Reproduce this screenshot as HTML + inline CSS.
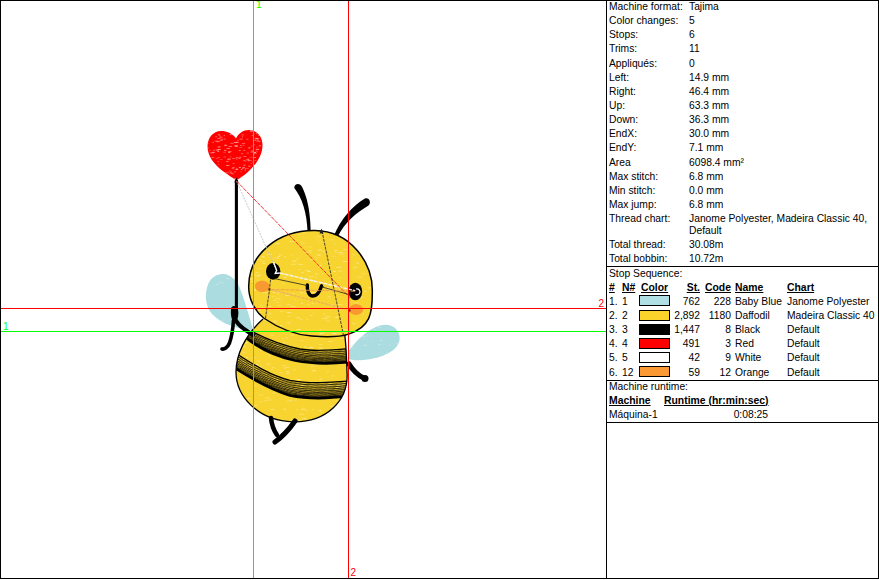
<!DOCTYPE html>
<html><head><meta charset="utf-8">
<style>
html,body{margin:0;padding:0;background:#fff;}
body{width:879px;height:580px;position:relative;overflow:hidden;font-family:"Liberation Sans",sans-serif;font-size:10.3px;color:#000;}
.t{position:absolute;line-height:14px;white-space:nowrap;}
.r{text-align:right;}
.lb{position:absolute;font-size:10px;line-height:10px;}
.b{font-weight:bold;text-decoration:underline;font-size:10.4px;}
.ln{position:absolute;background:#000;}
.sw{position:absolute;left:639px;width:29px;height:9px;border:1px solid #000;}
svg{position:absolute;left:0;top:0;}
</style></head><body>
<svg width="879" height="580" viewBox="0 0 879 580">
 <defs>
  <pattern id="hatch" width="2.2" height="2.2" patternUnits="userSpaceOnUse" patternTransform="rotate(14)">
   <rect x="0" y="0" width="2.2" height="1.2" fill="#000"/>
  </pattern>
  <pattern id="hatch2" width="2.4" height="2.4" patternUnits="userSpaceOnUse" patternTransform="rotate(-5)">
   <rect x="0" y="0" width="2.4" height="0.9" fill="#000"/>
  </pattern>
  <clipPath id="bc"><path d="M263,319 C245,335 236,355 236,372 C236,396 258,421 293,421.8 C326,422.5 349,401 347,372 C346.5,355 346,340 344,330 Z"/></clipPath>
  <clipPath id="hdc"><path d="M315,230.5 C350,231 373,262 372.3,292 C372.5,314 370,327 348.8,334.1 C340,337 325,337 311.9,336 C295,335 281,330 263.6,318 C254,310 248.5,298 248.7,286 C249,254 278,230 315,230.5 Z"/></clipPath>
  <clipPath id="hc"><path d="M236,138.5 C232,133 227,131 221,131 C213,131 207.5,138 207.5,146.5 C207.5,156 214,164 222,170.5 C228,175 233,178 236.4,180.5 C240,178 245,175 250,170 C257,163 262.5,155 262.5,145 C262.5,136 256,130 249,130 C243,130 239,133 236,138.5 Z"/></clipPath>
  <clipPath id="wc"><path d="M253,330 C240,329 222,325 212,314 C205,306 205,294 207,288 C209,279 215,274 223,274 C230,274 236,280 239,286 C244,298 249,315 253,330 Z M348.5,351 C355,343 365,330 380,325.5 C392,322.5 401,330 399.5,340 C398,350 385,357 368,359.5 C358,361 351,360 348.5,359 Z"/></clipPath>
 </defs>
 <path d="M253,330 C240,329 222,325 212,314 C205,306 205,294 207,288 C209,279 215,274 223,274 C230,274 236,280 239,286 C244,298 249,315 253,330 Z" fill="#abdcdf"/>
 <path d="M348.5,351 C355,343 365,330 380,325.5 C392,322.5 401,330 399.5,340 C398,350 385,357 368,359.5 C358,361 351,360 348.5,359 Z" fill="#abdcdf"/>
 <g clip-path="url(#wc)"><rect x="215.6" y="284.2" width="2.3" height="0.8" fill="#d8f0f2" opacity="0.64"/><rect x="250.8" y="333.5" width="2.9" height="0.8" fill="#d8f0f2" opacity="0.48"/><rect x="254.1" y="293.2" width="3.0" height="0.8" fill="#d8f0f2" opacity="0.72"/><rect x="205.9" y="331.7" width="1.8" height="0.8" fill="#d8f0f2" opacity="0.69"/><rect x="249.5" y="278.5" width="3.6" height="0.8" fill="#d8f0f2" opacity="0.71"/><rect x="251.4" y="302.2" width="2.6" height="0.8" fill="#d8f0f2" opacity="0.51"/><rect x="255.5" y="314.1" width="1.8" height="0.8" fill="#d8f0f2" opacity="0.69"/><rect x="219.8" y="320.2" width="2.9" height="0.8" fill="#d8f0f2" opacity="0.57"/><rect x="251.8" y="314.7" width="2.2" height="0.8" fill="#d8f0f2" opacity="0.43"/><rect x="222.0" y="282.4" width="1.5" height="0.8" fill="#d8f0f2" opacity="0.79"/><rect x="203.7" y="280.6" width="1.6" height="0.8" fill="#d8f0f2" opacity="0.64"/><rect x="257.3" y="289.2" width="2.1" height="0.8" fill="#d8f0f2" opacity="0.49"/><rect x="250.9" y="280.4" width="3.0" height="0.8" fill="#d8f0f2" opacity="0.57"/><rect x="218.4" y="282.3" width="2.6" height="0.8" fill="#d8f0f2" opacity="0.59"/><rect x="236.6" y="326.8" width="1.6" height="0.8" fill="#d8f0f2" opacity="0.68"/><rect x="219.3" y="325.3" width="3.5" height="0.8" fill="#d8f0f2" opacity="0.48"/><rect x="209.4" y="332.9" width="3.8" height="0.8" fill="#d8f0f2" opacity="0.77"/><rect x="203.1" y="294.0" width="3.8" height="0.8" fill="#d8f0f2" opacity="0.43"/><rect x="241.0" y="270.2" width="3.8" height="0.8" fill="#d8f0f2" opacity="0.75"/><rect x="202.8" y="331.6" width="2.1" height="0.8" fill="#d8f0f2" opacity="0.74"/><rect x="205.8" y="304.7" width="1.6" height="0.8" fill="#d8f0f2" opacity="0.58"/><rect x="226.4" y="278.1" width="2.9" height="0.8" fill="#d8f0f2" opacity="0.73"/><rect x="200.2" y="306.0" width="2.8" height="0.8" fill="#d8f0f2" opacity="0.69"/><rect x="241.7" y="284.5" width="2.0" height="0.8" fill="#d8f0f2" opacity="0.59"/><rect x="213.4" y="334.2" width="2.8" height="0.8" fill="#d8f0f2" opacity="0.54"/><rect x="231.7" y="273.3" width="3.1" height="0.8" fill="#d8f0f2" opacity="0.59"/><rect x="258.9" y="285.4" width="1.7" height="0.8" fill="#d8f0f2" opacity="0.58"/><rect x="259.7" y="285.7" width="2.7" height="0.8" fill="#d8f0f2" opacity="0.54"/><rect x="225.0" y="332.2" width="1.5" height="0.8" fill="#d8f0f2" opacity="0.51"/><rect x="235.6" y="311.8" width="3.5" height="0.8" fill="#d8f0f2" opacity="0.73"/><rect x="380.1" y="340.3" width="2.5" height="0.8" fill="#d8f0f2" opacity="0.61"/><rect x="385.9" y="356.4" width="2.7" height="0.8" fill="#d8f0f2" opacity="0.76"/><rect x="394.7" y="356.3" width="2.0" height="0.8" fill="#d8f0f2" opacity="0.54"/><rect x="371.7" y="340.6" width="2.6" height="0.8" fill="#d8f0f2" opacity="0.45"/><rect x="370.9" y="359.0" width="3.9" height="0.8" fill="#d8f0f2" opacity="0.70"/><rect x="363.2" y="344.8" width="4.0" height="0.8" fill="#d8f0f2" opacity="0.76"/><rect x="378.3" y="344.1" width="2.4" height="0.8" fill="#d8f0f2" opacity="0.80"/><rect x="373.8" y="329.4" width="1.7" height="0.8" fill="#d8f0f2" opacity="0.55"/><rect x="392.7" y="362.6" width="1.8" height="0.8" fill="#d8f0f2" opacity="0.65"/><rect x="385.8" y="352.4" width="1.8" height="0.8" fill="#d8f0f2" opacity="0.60"/><rect x="351.5" y="324.7" width="1.7" height="0.8" fill="#d8f0f2" opacity="0.43"/><rect x="378.2" y="327.2" width="2.2" height="0.8" fill="#d8f0f2" opacity="0.74"/><rect x="346.3" y="335.6" width="1.7" height="0.8" fill="#d8f0f2" opacity="0.70"/><rect x="380.5" y="331.7" width="1.6" height="0.8" fill="#d8f0f2" opacity="0.62"/><rect x="395.7" y="343.0" width="2.7" height="0.8" fill="#d8f0f2" opacity="0.48"/><rect x="346.7" y="356.3" width="3.7" height="0.8" fill="#d8f0f2" opacity="0.46"/><rect x="366.1" y="335.5" width="2.0" height="0.8" fill="#d8f0f2" opacity="0.48"/><rect x="388.7" y="345.3" width="2.2" height="0.8" fill="#d8f0f2" opacity="0.48"/><rect x="398.5" y="335.6" width="3.9" height="0.8" fill="#d8f0f2" opacity="0.63"/><rect x="392.8" y="321.7" width="3.3" height="0.8" fill="#d8f0f2" opacity="0.71"/><rect x="359.5" y="324.5" width="3.4" height="0.8" fill="#d8f0f2" opacity="0.46"/><rect x="361.4" y="336.4" width="3.8" height="0.8" fill="#d8f0f2" opacity="0.73"/><rect x="381.2" y="362.1" width="3.1" height="0.8" fill="#d8f0f2" opacity="0.63"/><rect x="351.0" y="347.2" width="2.2" height="0.8" fill="#d8f0f2" opacity="0.80"/><rect x="396.8" y="352.4" width="2.1" height="0.8" fill="#d8f0f2" opacity="0.41"/></g>
 <path d="M294.3,188 C294,183.5 299.5,182.5 301.5,186 C306,194 310.5,208 310.8,233 L307.6,233 C307,212 302,198 294.3,188 Z" fill="#000"/>
 <path d="M365,198.5 C369.5,197 371.5,203 368.5,205.5 C356,213 345,222 337.5,237 L334,235.5 C341,219 352,206 365,198.5 Z" fill="#000"/>
 <path d="M263,319 C245,335 236,355 236,372 C236,396 258,421 293,421.8 C326,422.5 349,401 347,372 C346.5,355 346,340 344,330 Z" fill="#f8d431"/>
 <g clip-path="url(#bc)"><rect x="311.8" y="382.7" width="1.7" height="0.8" fill="#fdeca0" opacity="0.67"/><rect x="259.4" y="377.7" width="2.9" height="0.8" fill="#fff3c0" opacity="0.52"/><rect x="317.7" y="383.1" width="2.2" height="0.8" fill="#fff3c0" opacity="0.46"/><rect x="348.4" y="411.1" width="4.7" height="0.8" fill="#fff3c0" opacity="0.64"/><rect x="266.5" y="339.3" width="4.5" height="0.8" fill="#fff3c0" opacity="0.58"/><rect x="318.7" y="410.7" width="2.2" height="0.8" fill="#fdeca0" opacity="0.37"/><rect x="315.0" y="364.3" width="2.8" height="0.8" fill="#fff3c0" opacity="0.55"/><rect x="282.2" y="338.2" width="1.6" height="0.8" fill="#fdeca0" opacity="0.74"/><rect x="284.6" y="367.1" width="4.6" height="0.8" fill="#fff3c0" opacity="0.55"/><rect x="311.3" y="370.5" width="4.3" height="0.8" fill="#fdeca0" opacity="0.77"/><rect x="318.9" y="347.6" width="4.0" height="0.8" fill="#fff3c0" opacity="0.78"/><rect x="282.2" y="386.9" width="2.3" height="0.8" fill="#fff3c0" opacity="0.70"/><rect x="297.6" y="358.0" width="4.4" height="0.8" fill="#fff3c0" opacity="0.51"/><rect x="261.1" y="382.5" width="2.3" height="0.8" fill="#fdeca0" opacity="0.53"/><rect x="319.7" y="362.7" width="3.2" height="0.8" fill="#fdeca0" opacity="0.37"/><rect x="330.5" y="358.0" width="3.6" height="0.8" fill="#fff3c0" opacity="0.67"/><rect x="319.6" y="378.7" width="2.4" height="0.8" fill="#fff3c0" opacity="0.67"/><rect x="295.3" y="423.6" width="2.0" height="0.8" fill="#fff3c0" opacity="0.70"/><rect x="327.2" y="371.0" width="1.6" height="0.8" fill="#fff3c0" opacity="0.69"/><rect x="293.4" y="369.5" width="2.1" height="0.8" fill="#fff3c0" opacity="0.63"/><rect x="309.6" y="346.8" width="4.3" height="0.8" fill="#fdeca0" opacity="0.54"/><rect x="241.8" y="320.3" width="3.1" height="0.8" fill="#fff3c0" opacity="0.60"/><rect x="298.3" y="419.9" width="2.7" height="0.8" fill="#fdeca0" opacity="0.69"/><rect x="231.1" y="375.1" width="2.1" height="0.8" fill="#fdeca0" opacity="0.51"/><rect x="275.6" y="345.1" width="2.8" height="0.8" fill="#fdeca0" opacity="0.59"/><rect x="294.7" y="358.8" width="2.9" height="0.8" fill="#fdeca0" opacity="0.70"/><rect x="254.8" y="317.8" width="4.7" height="0.8" fill="#fdeca0" opacity="0.64"/><rect x="318.7" y="344.1" width="3.2" height="0.8" fill="#fdeca0" opacity="0.66"/><rect x="309.9" y="347.0" width="2.7" height="0.8" fill="#fff3c0" opacity="0.63"/><rect x="313.9" y="352.1" width="4.6" height="0.8" fill="#fff3c0" opacity="0.45"/><rect x="314.2" y="318.0" width="4.7" height="0.8" fill="#fff3c0" opacity="0.70"/><rect x="303.1" y="423.6" width="2.3" height="0.8" fill="#fff3c0" opacity="0.45"/><rect x="248.0" y="421.1" width="2.7" height="0.8" fill="#fff3c0" opacity="0.55"/><rect x="251.1" y="335.1" width="3.6" height="0.8" fill="#fff3c0" opacity="0.69"/><rect x="272.6" y="392.7" width="2.3" height="0.8" fill="#fdeca0" opacity="0.75"/><rect x="287.5" y="321.5" width="3.2" height="0.8" fill="#fdeca0" opacity="0.65"/><rect x="322.0" y="389.8" width="4.8" height="0.8" fill="#fff3c0" opacity="0.36"/><rect x="235.3" y="353.8" width="4.9" height="0.8" fill="#fff3c0" opacity="0.62"/><rect x="237.5" y="326.2" width="1.6" height="0.8" fill="#fdeca0" opacity="0.66"/><rect x="296.4" y="319.8" width="2.0" height="0.8" fill="#fdeca0" opacity="0.66"/><rect x="286.1" y="346.8" width="3.5" height="0.8" fill="#fff3c0" opacity="0.51"/><rect x="230.4" y="416.6" width="2.5" height="0.8" fill="#fff3c0" opacity="0.36"/><rect x="267.2" y="380.1" width="2.4" height="0.8" fill="#fdeca0" opacity="0.40"/><rect x="286.3" y="371.3" width="2.6" height="0.8" fill="#fff3c0" opacity="0.75"/><rect x="313.1" y="370.1" width="2.9" height="0.8" fill="#fff3c0" opacity="0.53"/><rect x="286.2" y="373.2" width="3.4" height="0.8" fill="#fdeca0" opacity="0.70"/><rect x="264.2" y="347.6" width="2.9" height="0.8" fill="#fdeca0" opacity="0.64"/><rect x="304.4" y="346.4" width="2.2" height="0.8" fill="#fff3c0" opacity="0.74"/><rect x="313.0" y="396.9" width="3.1" height="0.8" fill="#fdeca0" opacity="0.53"/><rect x="335.7" y="424.1" width="4.7" height="0.8" fill="#fdeca0" opacity="0.73"/><rect x="243.1" y="373.8" width="2.7" height="0.8" fill="#fff3c0" opacity="0.54"/><rect x="234.7" y="346.8" width="2.7" height="0.8" fill="#fdeca0" opacity="0.78"/><rect x="231.6" y="331.3" width="2.9" height="0.8" fill="#fdeca0" opacity="0.64"/><rect x="283.7" y="423.9" width="4.6" height="0.8" fill="#fdeca0" opacity="0.62"/><rect x="299.9" y="334.1" width="3.1" height="0.8" fill="#fff3c0" opacity="0.76"/><rect x="256.0" y="364.2" width="3.4" height="0.8" fill="#fdeca0" opacity="0.50"/><rect x="231.5" y="394.4" width="4.7" height="0.8" fill="#fdeca0" opacity="0.62"/><rect x="321.4" y="351.7" width="4.9" height="0.8" fill="#fdeca0" opacity="0.60"/><rect x="347.2" y="335.2" width="2.2" height="0.8" fill="#fdeca0" opacity="0.71"/><rect x="321.0" y="321.3" width="1.6" height="0.8" fill="#fdeca0" opacity="0.71"/><rect x="324.9" y="384.8" width="4.1" height="0.8" fill="#fff3c0" opacity="0.75"/><rect x="326.6" y="414.1" width="4.1" height="0.8" fill="#fdeca0" opacity="0.49"/><rect x="303.8" y="417.9" width="1.7" height="0.8" fill="#fff3c0" opacity="0.60"/><rect x="335.5" y="387.2" width="2.9" height="0.8" fill="#fff3c0" opacity="0.64"/><rect x="289.4" y="421.5" width="2.3" height="0.8" fill="#fdeca0" opacity="0.48"/><rect x="310.9" y="322.2" width="2.2" height="0.8" fill="#fff3c0" opacity="0.46"/><rect x="342.3" y="388.2" width="1.9" height="0.8" fill="#fff3c0" opacity="0.64"/><rect x="342.2" y="350.2" width="1.5" height="0.8" fill="#fff3c0" opacity="0.53"/><rect x="244.6" y="342.9" width="1.9" height="0.8" fill="#fff3c0" opacity="0.51"/><rect x="296.9" y="357.8" width="4.8" height="0.8" fill="#fdeca0" opacity="0.64"/><rect x="254.5" y="316.3" width="3.8" height="0.8" fill="#fdeca0" opacity="0.64"/><rect x="283.8" y="368.3" width="1.7" height="0.8" fill="#fdeca0" opacity="0.59"/><rect x="245.6" y="357.2" width="2.3" height="0.8" fill="#fff3c0" opacity="0.55"/><rect x="319.5" y="398.7" width="4.0" height="0.8" fill="#fdeca0" opacity="0.37"/><rect x="247.7" y="332.9" width="1.6" height="0.8" fill="#fff3c0" opacity="0.36"/><rect x="247.4" y="393.5" width="2.0" height="0.8" fill="#fdeca0" opacity="0.50"/><rect x="301.1" y="340.3" width="2.1" height="0.8" fill="#fff3c0" opacity="0.55"/><rect x="254.1" y="385.4" width="2.1" height="0.8" fill="#fff3c0" opacity="0.43"/><rect x="279.2" y="356.6" width="4.1" height="0.8" fill="#fdeca0" opacity="0.39"/><rect x="286.9" y="319.4" width="3.7" height="0.8" fill="#fff3c0" opacity="0.44"/><rect x="342.2" y="361.5" width="4.3" height="0.8" fill="#fff3c0" opacity="0.73"/><rect x="295.0" y="418.4" width="2.0" height="0.8" fill="#fff3c0" opacity="0.52"/><rect x="340.9" y="326.8" width="3.8" height="0.8" fill="#fff3c0" opacity="0.47"/><rect x="265.1" y="397.5" width="4.2" height="0.8" fill="#fdeca0" opacity="0.66"/><rect x="305.4" y="410.2" width="2.7" height="0.8" fill="#fdeca0" opacity="0.46"/><rect x="318.9" y="410.3" width="2.8" height="0.8" fill="#fff3c0" opacity="0.62"/><rect x="349.9" y="407.3" width="3.8" height="0.8" fill="#fdeca0" opacity="0.78"/><rect x="261.2" y="369.6" width="1.8" height="0.8" fill="#fdeca0" opacity="0.70"/><rect x="282.1" y="378.7" width="2.2" height="0.8" fill="#fff3c0" opacity="0.78"/><rect x="253.0" y="364.2" width="4.5" height="0.8" fill="#fff3c0" opacity="0.79"/><rect x="252.4" y="370.7" width="3.6" height="0.8" fill="#fff3c0" opacity="0.59"/><rect x="253.8" y="376.2" width="2.7" height="0.8" fill="#fdeca0" opacity="0.35"/><rect x="312.5" y="384.0" width="3.7" height="0.8" fill="#fdeca0" opacity="0.56"/><rect x="237.8" y="393.8" width="2.3" height="0.8" fill="#fff3c0" opacity="0.57"/><rect x="332.8" y="417.9" width="3.0" height="0.8" fill="#fff3c0" opacity="0.49"/><rect x="259.0" y="394.6" width="4.2" height="0.8" fill="#fdeca0" opacity="0.59"/><rect x="339.8" y="387.1" width="4.9" height="0.8" fill="#fdeca0" opacity="0.41"/><rect x="312.2" y="361.4" width="4.5" height="0.8" fill="#fdeca0" opacity="0.60"/><rect x="298.7" y="389.2" width="4.9" height="0.8" fill="#fdeca0" opacity="0.38"/><rect x="342.0" y="330.3" width="3.9" height="0.8" fill="#fff3c0" opacity="0.47"/><rect x="295.7" y="409.2" width="2.8" height="0.8" fill="#fdeca0" opacity="0.40"/><rect x="287.1" y="326.1" width="3.6" height="0.8" fill="#fdeca0" opacity="0.73"/><rect x="293.8" y="329.1" width="3.6" height="0.8" fill="#fff3c0" opacity="0.72"/><rect x="340.2" y="356.0" width="3.8" height="0.8" fill="#fff3c0" opacity="0.52"/><rect x="296.5" y="379.0" width="4.5" height="0.8" fill="#fff3c0" opacity="0.65"/><rect x="264.4" y="400.2" width="3.7" height="0.8" fill="#fdeca0" opacity="0.56"/><rect x="283.0" y="408.7" width="3.2" height="0.8" fill="#fdeca0" opacity="0.76"/><rect x="291.2" y="321.5" width="2.0" height="0.8" fill="#fdeca0" opacity="0.62"/><rect x="348.9" y="402.2" width="2.5" height="0.8" fill="#fff3c0" opacity="0.56"/><rect x="326.5" y="358.4" width="4.7" height="0.8" fill="#fff3c0" opacity="0.57"/><rect x="311.9" y="409.0" width="1.8" height="0.8" fill="#fff3c0" opacity="0.40"/><rect x="294.0" y="420.8" width="4.8" height="0.8" fill="#fff3c0" opacity="0.55"/><rect x="241.8" y="340.3" width="2.0" height="0.8" fill="#fff3c0" opacity="0.64"/><rect x="274.1" y="412.7" width="2.2" height="0.8" fill="#fdeca0" opacity="0.36"/><rect x="288.0" y="329.6" width="2.0" height="0.8" fill="#fdeca0" opacity="0.75"/><rect x="298.0" y="332.0" width="2.7" height="0.8" fill="#fdeca0" opacity="0.43"/><rect x="263.8" y="320.3" width="4.0" height="0.8" fill="#fdeca0" opacity="0.54"/><rect x="243.1" y="319.1" width="3.8" height="0.8" fill="#fdeca0" opacity="0.56"/><rect x="329.4" y="415.2" width="2.1" height="0.8" fill="#fff3c0" opacity="0.57"/><rect x="340.0" y="337.9" width="3.8" height="0.8" fill="#fdeca0" opacity="0.38"/><rect x="343.8" y="383.0" width="2.6" height="0.8" fill="#fdeca0" opacity="0.68"/><rect x="328.0" y="341.2" width="4.5" height="0.8" fill="#fff3c0" opacity="0.58"/><rect x="259.9" y="375.7" width="2.6" height="0.8" fill="#fff3c0" opacity="0.43"/><rect x="321.1" y="352.0" width="3.0" height="0.8" fill="#fdeca0" opacity="0.66"/><rect x="285.6" y="328.0" width="1.8" height="0.8" fill="#fff3c0" opacity="0.43"/><rect x="289.6" y="385.9" width="2.8" height="0.8" fill="#fdeca0" opacity="0.52"/><rect x="257.0" y="381.7" width="2.4" height="0.8" fill="#fff3c0" opacity="0.39"/><rect x="278.8" y="386.3" width="2.8" height="0.8" fill="#fff3c0" opacity="0.53"/><rect x="244.8" y="342.5" width="3.1" height="0.8" fill="#fff3c0" opacity="0.60"/><rect x="326.0" y="389.4" width="4.5" height="0.8" fill="#fdeca0" opacity="0.52"/><rect x="260.1" y="349.7" width="1.9" height="0.8" fill="#fff3c0" opacity="0.71"/><rect x="301.0" y="385.0" width="3.9" height="0.8" fill="#fdeca0" opacity="0.79"/><rect x="294.1" y="400.5" width="3.2" height="0.8" fill="#fdeca0" opacity="0.39"/><rect x="272.3" y="367.1" width="2.2" height="0.8" fill="#fff3c0" opacity="0.48"/><rect x="326.7" y="348.6" width="3.2" height="0.8" fill="#fff3c0" opacity="0.44"/><rect x="289.6" y="316.3" width="3.0" height="0.8" fill="#fdeca0" opacity="0.39"/><rect x="259.1" y="366.4" width="3.2" height="0.8" fill="#fff3c0" opacity="0.49"/><rect x="282.6" y="343.4" width="2.0" height="0.8" fill="#fdeca0" opacity="0.63"/><rect x="245.1" y="403.9" width="1.8" height="0.8" fill="#fdeca0" opacity="0.60"/><rect x="290.5" y="334.7" width="3.7" height="0.8" fill="#fff3c0" opacity="0.48"/><rect x="299.4" y="413.7" width="4.8" height="0.8" fill="#fdeca0" opacity="0.69"/><rect x="286.8" y="400.6" width="3.8" height="0.8" fill="#fff3c0" opacity="0.42"/><rect x="326.7" y="396.9" width="4.6" height="0.8" fill="#fff3c0" opacity="0.62"/><rect x="241.1" y="331.0" width="1.7" height="0.8" fill="#fff3c0" opacity="0.42"/><rect x="243.7" y="330.4" width="2.1" height="0.8" fill="#fff3c0" opacity="0.61"/><rect x="242.4" y="351.8" width="3.0" height="0.8" fill="#fff3c0" opacity="0.57"/><rect x="241.2" y="412.2" width="1.7" height="0.8" fill="#fdeca0" opacity="0.47"/><rect x="279.6" y="372.3" width="2.2" height="0.8" fill="#fff3c0" opacity="0.56"/><rect x="237.1" y="366.2" width="3.4" height="0.8" fill="#fff3c0" opacity="0.62"/><rect x="230.4" y="423.6" width="4.4" height="0.8" fill="#fdeca0" opacity="0.52"/><rect x="287.1" y="387.6" width="3.0" height="0.8" fill="#fff3c0" opacity="0.67"/><rect x="342.5" y="337.9" width="1.9" height="0.8" fill="#fdeca0" opacity="0.42"/><rect x="339.3" y="325.0" width="1.5" height="0.8" fill="#fff3c0" opacity="0.73"/><rect x="240.9" y="346.3" width="4.5" height="0.8" fill="#fff3c0" opacity="0.59"/><rect x="282.4" y="365.3" width="3.1" height="0.8" fill="#fff3c0" opacity="0.52"/><rect x="290.7" y="419.6" width="4.6" height="0.8" fill="#fdeca0" opacity="0.79"/><rect x="248.5" y="372.8" width="3.5" height="0.8" fill="#fdeca0" opacity="0.77"/><rect x="337.4" y="388.6" width="2.3" height="0.8" fill="#fdeca0" opacity="0.51"/><rect x="268.0" y="355.6" width="2.6" height="0.8" fill="#fff3c0" opacity="0.41"/><rect x="270.4" y="335.3" width="2.7" height="0.8" fill="#fdeca0" opacity="0.55"/><rect x="252.4" y="404.9" width="4.8" height="0.8" fill="#fff3c0" opacity="0.44"/><rect x="267.8" y="399.6" width="4.1" height="0.8" fill="#fff3c0" opacity="0.49"/><rect x="288.7" y="324.8" width="1.9" height="0.8" fill="#fdeca0" opacity="0.79"/><rect x="340.4" y="381.1" width="4.9" height="0.8" fill="#fdeca0" opacity="0.77"/><rect x="332.3" y="351.2" width="4.8" height="0.8" fill="#fff3c0" opacity="0.45"/><rect x="266.3" y="363.6" width="4.4" height="0.8" fill="#fdeca0" opacity="0.66"/><rect x="240.5" y="360.7" width="4.3" height="0.8" fill="#fff3c0" opacity="0.37"/><rect x="264.3" y="347.2" width="3.0" height="0.8" fill="#fff3c0" opacity="0.77"/><rect x="238.6" y="342.0" width="4.1" height="0.8" fill="#fdeca0" opacity="0.50"/><rect x="290.0" y="400.2" width="2.6" height="0.8" fill="#fff3c0" opacity="0.47"/><rect x="278.0" y="377.2" width="2.5" height="0.8" fill="#fdeca0" opacity="0.36"/><rect x="270.3" y="369.1" width="2.8" height="0.8" fill="#fdeca0" opacity="0.47"/><rect x="230.9" y="398.4" width="2.0" height="0.8" fill="#fff3c0" opacity="0.46"/><rect x="301.4" y="395.7" width="1.6" height="0.8" fill="#fdeca0" opacity="0.35"/><rect x="232.9" y="326.2" width="4.2" height="0.8" fill="#fff3c0" opacity="0.60"/><rect x="241.7" y="357.5" width="2.4" height="0.8" fill="#fdeca0" opacity="0.53"/><rect x="310.9" y="365.8" width="3.4" height="0.8" fill="#fdeca0" opacity="0.61"/><rect x="330.0" y="405.9" width="3.4" height="0.8" fill="#fdeca0" opacity="0.60"/><rect x="301.9" y="329.6" width="1.5" height="0.8" fill="#fff3c0" opacity="0.61"/><rect x="247.3" y="397.9" width="3.2" height="0.8" fill="#fff3c0" opacity="0.68"/><rect x="328.4" y="362.5" width="2.6" height="0.8" fill="#fff3c0" opacity="0.75"/><rect x="335.5" y="400.5" width="2.5" height="0.8" fill="#fff3c0" opacity="0.39"/><rect x="317.8" y="321.7" width="4.8" height="0.8" fill="#fdeca0" opacity="0.59"/><rect x="283.1" y="342.4" width="2.1" height="0.8" fill="#fff3c0" opacity="0.61"/><rect x="342.2" y="328.6" width="3.1" height="0.8" fill="#fdeca0" opacity="0.47"/><rect x="251.8" y="357.3" width="3.3" height="0.8" fill="#fdeca0" opacity="0.59"/><rect x="301.5" y="418.4" width="4.8" height="0.8" fill="#fdeca0" opacity="0.76"/><rect x="314.9" y="336.8" width="4.7" height="0.8" fill="#fff3c0" opacity="0.57"/><rect x="308.8" y="347.4" width="3.8" height="0.8" fill="#fdeca0" opacity="0.41"/><rect x="348.8" y="419.7" width="4.8" height="0.8" fill="#fdeca0" opacity="0.65"/><rect x="259.1" y="401.5" width="4.6" height="0.8" fill="#fdeca0" opacity="0.47"/><rect x="283.3" y="345.6" width="4.7" height="0.8" fill="#fdeca0" opacity="0.61"/><rect x="319.6" y="399.4" width="3.3" height="0.8" fill="#fff3c0" opacity="0.47"/><rect x="319.0" y="330.0" width="2.4" height="0.8" fill="#fdeca0" opacity="0.78"/><rect x="257.2" y="420.6" width="4.8" height="0.8" fill="#fff3c0" opacity="0.77"/><rect x="331.8" y="405.3" width="3.5" height="0.8" fill="#fdeca0" opacity="0.38"/><rect x="235.2" y="321.7" width="4.1" height="0.8" fill="#fff3c0" opacity="0.57"/><rect x="332.5" y="336.9" width="2.6" height="0.8" fill="#fdeca0" opacity="0.55"/><rect x="306.7" y="322.5" width="4.7" height="0.8" fill="#fff3c0" opacity="0.68"/><rect x="285.5" y="337.6" width="3.1" height="0.8" fill="#fdeca0" opacity="0.66"/><rect x="248.8" y="423.6" width="4.7" height="0.8" fill="#fdeca0" opacity="0.73"/><rect x="256.6" y="360.7" width="3.9" height="0.8" fill="#fdeca0" opacity="0.76"/><rect x="310.4" y="392.7" width="2.1" height="0.8" fill="#fdeca0" opacity="0.49"/><rect x="272.5" y="352.3" width="1.7" height="0.8" fill="#fdeca0" opacity="0.65"/><rect x="331.9" y="375.5" width="1.7" height="0.8" fill="#fff3c0" opacity="0.56"/><rect x="327.0" y="420.6" width="4.3" height="0.8" fill="#fff3c0" opacity="0.80"/><rect x="323.2" y="381.1" width="3.6" height="0.8" fill="#fff3c0" opacity="0.43"/><rect x="273.6" y="315.5" width="4.4" height="0.8" fill="#fff3c0" opacity="0.63"/><rect x="301.2" y="408.8" width="4.2" height="0.8" fill="#fff3c0" opacity="0.80"/><rect x="338.0" y="384.7" width="4.0" height="0.8" fill="#fff3c0" opacity="0.60"/><rect x="237.3" y="377.7" width="2.6" height="0.8" fill="#fdeca0" opacity="0.38"/><rect x="299.1" y="396.9" width="4.1" height="0.8" fill="#fff3c0" opacity="0.39"/><rect x="272.8" y="320.0" width="3.7" height="0.8" fill="#fff3c0" opacity="0.66"/><rect x="257.2" y="316.6" width="2.6" height="0.8" fill="#fff3c0" opacity="0.75"/><rect x="270.7" y="409.0" width="3.6" height="0.8" fill="#fff3c0" opacity="0.66"/><rect x="237.8" y="353.4" width="2.5" height="0.8" fill="#fdeca0" opacity="0.72"/><rect x="334.0" y="396.5" width="1.7" height="0.8" fill="#fdeca0" opacity="0.41"/><rect x="330.8" y="423.8" width="4.2" height="0.8" fill="#fdeca0" opacity="0.42"/><rect x="304.9" y="381.5" width="2.0" height="0.8" fill="#fff3c0" opacity="0.79"/><rect x="237.1" y="363.4" width="4.4" height="0.8" fill="#fdeca0" opacity="0.68"/>
  <path d="M252,331.5 C268,340 285,346 300,349 C315,351.5 335,350 350,348.5 L350,362 C335,363.5 315,364.5 295,360.5 C275,356 258,348 244,336 Z" fill="url(#hatch)" opacity="0.35"/>
  <path d="M250.80,332.17 C266.50,341.20 283.50,347.50 299.25,350.72 C315.00,353.45 335.00,352.02 350.00,350.52" stroke="#000" stroke-width="0.75" fill="none"/><path d="M249.60,332.85 C265.00,342.40 282.00,349.00 298.50,352.45 C315.00,355.40 335.00,354.05 350.00,352.55" stroke="#000" stroke-width="0.75" fill="none"/><path d="M248.56,333.44 C263.70,343.44 280.70,350.30 297.85,353.95 C315.00,357.09 335.00,355.81 350.00,354.31" stroke="#000" stroke-width="0.75" fill="none"/><path d="M247.68,333.93 C262.60,344.32 279.60,351.40 297.30,355.21 C315.00,358.52 335.00,357.29 350.00,355.79" stroke="#000" stroke-width="0.75" fill="none"/><path d="M246.88,334.38 C261.60,345.12 278.60,352.40 296.80,356.36 C315.00,359.82 335.00,358.64 350.00,357.14" stroke="#000" stroke-width="0.75" fill="none"/><path d="M246.16,334.79 C260.70,345.84 277.70,353.30 296.35,357.40 C315.00,360.99 335.00,359.86 350.00,358.36" stroke="#000" stroke-width="0.75" fill="none"/><path d="M245.52,335.14 C259.90,346.48 276.90,354.10 295.95,358.31 C315.00,362.03 335.00,360.94 350.00,359.44" stroke="#000" stroke-width="0.75" fill="none"/><path d="M244.96,335.46 C259.20,347.04 276.20,354.80 295.60,359.12 C315.00,362.94 335.00,361.88 350.00,360.38" stroke="#000" stroke-width="0.75" fill="none"/>
  <path d="M252,331.5 C268,340 285,346 300,349 C315,351.5 335,350 350,348.5" stroke="#000" stroke-width="1.3" fill="none"/>
  <path d="M244,336 C258,348 275,356 295,360.5 C315,364.5 335,363.5 350,362" stroke="#000" stroke-width="2.8" fill="none"/>
  <path d="M232,350.5 C255,366 272,376 290,380.3 C310,384 330,382.5 350,381 L350,396 C330,398 310,399.5 290,395.4 C270,389 252,379 232,366 Z" fill="url(#hatch)" opacity="0.35"/>
  <path d="M232.00,352.82 C254.55,367.95 271.70,377.95 290.00,382.56 C310.00,386.32 330.00,384.82 350.00,383.25" stroke="#000" stroke-width="0.75" fill="none"/><path d="M232.00,355.15 C254.10,369.90 271.40,379.90 290.00,384.83 C310.00,388.65 330.00,387.15 350.00,385.50" stroke="#000" stroke-width="0.75" fill="none"/><path d="M232.00,357.17 C253.71,371.59 271.14,381.59 290.00,386.79 C310.00,390.67 330.00,389.17 350.00,387.45" stroke="#000" stroke-width="0.75" fill="none"/><path d="M232.00,358.87 C253.38,373.02 270.92,383.02 290.00,388.45 C310.00,392.37 330.00,390.87 350.00,389.10" stroke="#000" stroke-width="0.75" fill="none"/><path d="M232.00,360.42 C253.08,374.32 270.72,384.32 290.00,389.96 C310.00,393.92 330.00,392.42 350.00,390.60" stroke="#000" stroke-width="0.75" fill="none"/><path d="M232.00,361.81 C252.81,375.49 270.54,385.49 290.00,391.32 C310.00,395.31 330.00,393.82 350.00,391.95" stroke="#000" stroke-width="0.75" fill="none"/><path d="M232.00,363.06 C252.57,376.53 270.38,386.53 290.00,392.53 C310.00,396.56 330.00,395.05 350.00,393.15" stroke="#000" stroke-width="0.75" fill="none"/><path d="M232.00,364.14 C252.36,377.44 270.24,387.44 290.00,393.59 C310.00,397.64 330.00,396.14 350.00,394.20" stroke="#000" stroke-width="0.75" fill="none"/>
  <path d="M232,350.5 C255,366 272,376 290,380.3 C310,384 330,382.5 350,381" stroke="#000" stroke-width="1.3" fill="none"/>
  <path d="M232,366 C252,379 270,389 290,395.4 C310,399.5 330,398 350,396" stroke="#000" stroke-width="2.8" fill="none"/>
 </g>
 <path d="M263,319 C245,335 236,355 236,372 C236,396 258,421 293,421.8 C326,422.5 349,401 347,372 C346.5,355 346,340 344,330" fill="none" stroke="#000" stroke-width="1.3"/>
 <path d="M271,418 Q272,428 277,435" stroke="#000" stroke-width="4.5" fill="none" stroke-linecap="round"/>
 <path d="M295,421 Q286,434 275,442" stroke="#000" stroke-width="5" fill="none" stroke-linecap="round"/>
 <path d="M349,364 Q355,374 364.5,378.5" stroke="#000" stroke-width="5.2" fill="none" stroke-linecap="round"/>
 <circle cx="365" cy="378.5" r="3.5" fill="#000"/>
 <path d="M315,230.5 C350,231 373,262 372.3,292 C372.5,314 370,327 348.8,334.1 C340,337 325,337 311.9,336 C295,335 281,330 263.6,318 C254,310 248.5,298 248.7,286 C249,254 278,230 315,230.5 Z" fill="#f8d431"/>
 <g clip-path="url(#hdc)"><rect x="362.8" y="253.1" width="4.5" height="0.8" fill="#fff3c0" opacity="0.46"/><rect x="376.2" y="279.7" width="1.9" height="0.8" fill="#fff3c0" opacity="0.76"/><rect x="332.0" y="333.1" width="4.6" height="0.8" fill="#fff3c0" opacity="0.80"/><rect x="361.3" y="273.5" width="4.3" height="0.8" fill="#fff3c0" opacity="0.45"/><rect x="319.4" y="328.9" width="1.8" height="0.8" fill="#fdeca0" opacity="0.71"/><rect x="363.5" y="291.2" width="3.1" height="0.8" fill="#fff3c0" opacity="0.48"/><rect x="243.3" y="244.8" width="3.0" height="0.8" fill="#fff3c0" opacity="0.55"/><rect x="259.8" y="304.6" width="2.3" height="0.8" fill="#fff3c0" opacity="0.49"/><rect x="365.8" y="260.4" width="3.2" height="0.8" fill="#fff3c0" opacity="0.77"/><rect x="363.0" y="248.3" width="4.5" height="0.8" fill="#fdeca0" opacity="0.66"/><rect x="267.4" y="321.4" width="2.7" height="0.8" fill="#fdeca0" opacity="0.56"/><rect x="329.0" y="305.3" width="3.5" height="0.8" fill="#fdeca0" opacity="0.59"/><rect x="266.8" y="326.2" width="1.7" height="0.8" fill="#fff3c0" opacity="0.40"/><rect x="374.6" y="256.5" width="3.0" height="0.8" fill="#fff3c0" opacity="0.75"/><rect x="337.4" y="332.8" width="3.1" height="0.8" fill="#fdeca0" opacity="0.39"/><rect x="360.6" y="238.9" width="3.9" height="0.8" fill="#fdeca0" opacity="0.47"/><rect x="310.2" y="259.0" width="2.5" height="0.8" fill="#fdeca0" opacity="0.71"/><rect x="322.6" y="251.3" width="2.6" height="0.8" fill="#fdeca0" opacity="0.77"/><rect x="278.8" y="298.6" width="1.8" height="0.8" fill="#fff3c0" opacity="0.79"/><rect x="368.4" y="233.5" width="4.7" height="0.8" fill="#fff3c0" opacity="0.35"/><rect x="315.2" y="273.7" width="3.5" height="0.8" fill="#fdeca0" opacity="0.42"/><rect x="274.4" y="257.1" width="3.4" height="0.8" fill="#fdeca0" opacity="0.43"/><rect x="378.3" y="228.9" width="3.1" height="0.8" fill="#fff3c0" opacity="0.69"/><rect x="240.4" y="327.5" width="1.7" height="0.8" fill="#fff3c0" opacity="0.38"/><rect x="284.9" y="280.6" width="1.6" height="0.8" fill="#fdeca0" opacity="0.48"/><rect x="323.1" y="313.7" width="1.9" height="0.8" fill="#fff3c0" opacity="0.55"/><rect x="316.7" y="254.5" width="4.0" height="0.8" fill="#fff3c0" opacity="0.67"/><rect x="308.5" y="250.4" width="3.5" height="0.8" fill="#fdeca0" opacity="0.57"/><rect x="268.4" y="336.6" width="1.7" height="0.8" fill="#fdeca0" opacity="0.55"/><rect x="285.5" y="295.0" width="3.6" height="0.8" fill="#fff3c0" opacity="0.71"/><rect x="341.2" y="323.5" width="1.6" height="0.8" fill="#fdeca0" opacity="0.40"/><rect x="319.6" y="287.5" width="4.3" height="0.8" fill="#fdeca0" opacity="0.46"/><rect x="247.6" y="273.9" width="3.9" height="0.8" fill="#fff3c0" opacity="0.72"/><rect x="347.1" y="282.3" width="3.8" height="0.8" fill="#fff3c0" opacity="0.58"/><rect x="275.7" y="243.4" width="3.9" height="0.8" fill="#fff3c0" opacity="0.72"/><rect x="248.6" y="272.2" width="2.8" height="0.8" fill="#fdeca0" opacity="0.45"/><rect x="258.0" y="311.9" width="3.6" height="0.8" fill="#fff3c0" opacity="0.41"/><rect x="313.0" y="338.3" width="1.5" height="0.8" fill="#fdeca0" opacity="0.53"/><rect x="252.8" y="289.0" width="3.2" height="0.8" fill="#fdeca0" opacity="0.77"/><rect x="335.2" y="307.5" width="4.9" height="0.8" fill="#fff3c0" opacity="0.63"/><rect x="275.4" y="288.5" width="2.3" height="0.8" fill="#fdeca0" opacity="0.56"/><rect x="291.0" y="263.8" width="4.9" height="0.8" fill="#fdeca0" opacity="0.62"/><rect x="262.5" y="292.3" width="5.0" height="0.8" fill="#fdeca0" opacity="0.68"/><rect x="304.8" y="270.2" width="4.5" height="0.8" fill="#fdeca0" opacity="0.52"/><rect x="270.2" y="265.0" width="2.1" height="0.8" fill="#fdeca0" opacity="0.60"/><rect x="307.2" y="271.0" width="3.6" height="0.8" fill="#fff3c0" opacity="0.69"/><rect x="302.6" y="339.2" width="3.9" height="0.8" fill="#fdeca0" opacity="0.74"/><rect x="315.6" y="273.2" width="1.7" height="0.8" fill="#fff3c0" opacity="0.47"/><rect x="326.9" y="284.7" width="4.1" height="0.8" fill="#fdeca0" opacity="0.58"/><rect x="277.6" y="266.5" width="2.0" height="0.8" fill="#fff3c0" opacity="0.77"/><rect x="259.2" y="252.7" width="4.4" height="0.8" fill="#fff3c0" opacity="0.40"/><rect x="357.4" y="276.7" width="4.5" height="0.8" fill="#fff3c0" opacity="0.52"/><rect x="347.9" y="284.7" width="1.7" height="0.8" fill="#fdeca0" opacity="0.53"/><rect x="308.4" y="246.6" width="3.3" height="0.8" fill="#fdeca0" opacity="0.41"/><rect x="283.7" y="273.8" width="3.4" height="0.8" fill="#fff3c0" opacity="0.41"/><rect x="283.9" y="276.9" width="2.8" height="0.8" fill="#fff3c0" opacity="0.75"/><rect x="314.9" y="276.7" width="2.0" height="0.8" fill="#fff3c0" opacity="0.58"/><rect x="271.6" y="258.6" width="2.7" height="0.8" fill="#fdeca0" opacity="0.45"/><rect x="358.7" y="310.9" width="3.2" height="0.8" fill="#fff3c0" opacity="0.36"/><rect x="332.5" y="232.7" width="4.5" height="0.8" fill="#fff3c0" opacity="0.60"/><rect x="333.3" y="334.8" width="4.5" height="0.8" fill="#fff3c0" opacity="0.46"/><rect x="252.6" y="274.2" width="2.9" height="0.8" fill="#fff3c0" opacity="0.38"/><rect x="370.3" y="257.7" width="4.0" height="0.8" fill="#fff3c0" opacity="0.45"/><rect x="268.3" y="313.4" width="2.7" height="0.8" fill="#fdeca0" opacity="0.67"/><rect x="344.0" y="329.4" width="4.3" height="0.8" fill="#fff3c0" opacity="0.57"/><rect x="338.2" y="288.6" width="4.0" height="0.8" fill="#fff3c0" opacity="0.36"/><rect x="256.8" y="329.6" width="4.7" height="0.8" fill="#fff3c0" opacity="0.47"/><rect x="309.4" y="292.4" width="3.1" height="0.8" fill="#fff3c0" opacity="0.50"/><rect x="250.1" y="229.1" width="2.6" height="0.8" fill="#fff3c0" opacity="0.52"/><rect x="276.7" y="301.8" width="2.2" height="0.8" fill="#fff3c0" opacity="0.56"/><rect x="373.7" y="266.7" width="3.5" height="0.8" fill="#fdeca0" opacity="0.77"/><rect x="327.8" y="296.4" width="2.9" height="0.8" fill="#fff3c0" opacity="0.54"/><rect x="249.6" y="278.4" width="3.1" height="0.8" fill="#fff3c0" opacity="0.78"/><rect x="245.3" y="240.6" width="3.3" height="0.8" fill="#fff3c0" opacity="0.49"/><rect x="306.2" y="227.4" width="3.6" height="0.8" fill="#fff3c0" opacity="0.47"/><rect x="335.2" y="252.0" width="1.5" height="0.8" fill="#fff3c0" opacity="0.59"/><rect x="240.5" y="287.9" width="4.5" height="0.8" fill="#fdeca0" opacity="0.69"/><rect x="327.4" y="289.5" width="4.4" height="0.8" fill="#fff3c0" opacity="0.79"/><rect x="277.0" y="236.9" width="1.6" height="0.8" fill="#fdeca0" opacity="0.71"/><rect x="337.4" y="304.0" width="4.9" height="0.8" fill="#fdeca0" opacity="0.72"/><rect x="286.6" y="304.3" width="4.3" height="0.8" fill="#fff3c0" opacity="0.48"/><rect x="280.0" y="311.1" width="3.4" height="0.8" fill="#fdeca0" opacity="0.46"/><rect x="290.7" y="306.2" width="4.7" height="0.8" fill="#fdeca0" opacity="0.68"/><rect x="378.5" y="319.1" width="4.6" height="0.8" fill="#fff3c0" opacity="0.49"/><rect x="311.7" y="303.1" width="1.6" height="0.8" fill="#fff3c0" opacity="0.63"/><rect x="361.8" y="231.1" width="2.4" height="0.8" fill="#fff3c0" opacity="0.58"/><rect x="275.4" y="298.0" width="2.8" height="0.8" fill="#fdeca0" opacity="0.66"/><rect x="286.7" y="312.3" width="4.4" height="0.8" fill="#fff3c0" opacity="0.72"/><rect x="329.8" y="239.4" width="4.1" height="0.8" fill="#fdeca0" opacity="0.47"/><rect x="257.5" y="268.3" width="3.8" height="0.8" fill="#fdeca0" opacity="0.45"/><rect x="376.3" y="279.3" width="3.9" height="0.8" fill="#fdeca0" opacity="0.71"/><rect x="277.5" y="256.2" width="2.4" height="0.8" fill="#fff3c0" opacity="0.65"/><rect x="370.7" y="338.7" width="1.7" height="0.8" fill="#fdeca0" opacity="0.67"/><rect x="361.9" y="247.3" width="2.7" height="0.8" fill="#fdeca0" opacity="0.59"/><rect x="296.6" y="329.0" width="4.4" height="0.8" fill="#fdeca0" opacity="0.74"/><rect x="292.3" y="260.6" width="4.3" height="0.8" fill="#fff3c0" opacity="0.73"/><rect x="271.3" y="308.0" width="2.9" height="0.8" fill="#fff3c0" opacity="0.41"/><rect x="334.5" y="249.9" width="2.5" height="0.8" fill="#fff3c0" opacity="0.74"/><rect x="264.5" y="237.3" width="4.8" height="0.8" fill="#fff3c0" opacity="0.46"/><rect x="300.6" y="242.5" width="4.6" height="0.8" fill="#fdeca0" opacity="0.47"/><rect x="278.3" y="271.0" width="2.6" height="0.8" fill="#fdeca0" opacity="0.39"/><rect x="291.2" y="254.9" width="1.7" height="0.8" fill="#fff3c0" opacity="0.38"/><rect x="333.8" y="225.5" width="2.7" height="0.8" fill="#fdeca0" opacity="0.41"/><rect x="378.8" y="272.0" width="1.6" height="0.8" fill="#fff3c0" opacity="0.51"/><rect x="318.0" y="249.7" width="3.7" height="0.8" fill="#fff3c0" opacity="0.72"/><rect x="278.8" y="333.0" width="4.5" height="0.8" fill="#fff3c0" opacity="0.80"/><rect x="320.0" y="333.2" width="1.7" height="0.8" fill="#fdeca0" opacity="0.74"/><rect x="315.5" y="302.6" width="2.4" height="0.8" fill="#fff3c0" opacity="0.36"/><rect x="248.8" y="278.6" width="4.6" height="0.8" fill="#fff3c0" opacity="0.38"/><rect x="241.5" y="285.6" width="4.3" height="0.8" fill="#fff3c0" opacity="0.71"/><rect x="295.9" y="317.4" width="4.4" height="0.8" fill="#fdeca0" opacity="0.70"/><rect x="371.1" y="280.4" width="4.4" height="0.8" fill="#fdeca0" opacity="0.53"/><rect x="241.3" y="241.2" width="2.6" height="0.8" fill="#fff3c0" opacity="0.68"/><rect x="353.5" y="266.9" width="3.7" height="0.8" fill="#fff3c0" opacity="0.51"/><rect x="249.3" y="300.1" width="3.6" height="0.8" fill="#fdeca0" opacity="0.47"/><rect x="343.8" y="249.3" width="4.1" height="0.8" fill="#fdeca0" opacity="0.60"/><rect x="264.8" y="237.2" width="2.0" height="0.8" fill="#fff3c0" opacity="0.51"/><rect x="243.1" y="271.0" width="1.7" height="0.8" fill="#fdeca0" opacity="0.39"/><rect x="242.9" y="245.1" width="1.7" height="0.8" fill="#fff3c0" opacity="0.62"/><rect x="300.2" y="335.7" width="2.3" height="0.8" fill="#fdeca0" opacity="0.53"/><rect x="353.8" y="233.0" width="2.9" height="0.8" fill="#fdeca0" opacity="0.76"/><rect x="348.9" y="285.4" width="1.5" height="0.8" fill="#fff3c0" opacity="0.68"/><rect x="367.5" y="231.4" width="3.7" height="0.8" fill="#fff3c0" opacity="0.51"/><rect x="359.9" y="297.3" width="3.3" height="0.8" fill="#fdeca0" opacity="0.61"/><rect x="257.0" y="309.9" width="4.1" height="0.8" fill="#fff3c0" opacity="0.55"/><rect x="298.7" y="269.2" width="2.3" height="0.8" fill="#fdeca0" opacity="0.62"/><rect x="312.1" y="228.7" width="3.7" height="0.8" fill="#fdeca0" opacity="0.55"/><rect x="323.2" y="332.1" width="2.0" height="0.8" fill="#fff3c0" opacity="0.56"/><rect x="343.3" y="261.0" width="4.1" height="0.8" fill="#fff3c0" opacity="0.80"/><rect x="247.3" y="336.3" width="4.1" height="0.8" fill="#fdeca0" opacity="0.75"/><rect x="272.8" y="321.6" width="3.8" height="0.8" fill="#fdeca0" opacity="0.77"/><rect x="351.7" y="283.8" width="5.0" height="0.8" fill="#fdeca0" opacity="0.38"/><rect x="339.6" y="253.8" width="4.3" height="0.8" fill="#fdeca0" opacity="0.55"/><rect x="361.2" y="247.5" width="2.5" height="0.8" fill="#fdeca0" opacity="0.64"/><rect x="255.0" y="275.7" width="4.1" height="0.8" fill="#fdeca0" opacity="0.74"/><rect x="352.0" y="323.3" width="4.2" height="0.8" fill="#fdeca0" opacity="0.60"/><rect x="351.5" y="242.5" width="2.8" height="0.8" fill="#fdeca0" opacity="0.40"/><rect x="370.0" y="334.9" width="2.3" height="0.8" fill="#fff3c0" opacity="0.48"/><rect x="265.4" y="269.7" width="4.5" height="0.8" fill="#fff3c0" opacity="0.63"/><rect x="250.1" y="338.6" width="2.2" height="0.8" fill="#fdeca0" opacity="0.63"/><rect x="318.4" y="339.4" width="2.8" height="0.8" fill="#fff3c0" opacity="0.72"/><rect x="358.3" y="333.8" width="3.8" height="0.8" fill="#fdeca0" opacity="0.44"/><rect x="265.3" y="239.7" width="3.9" height="0.8" fill="#fdeca0" opacity="0.56"/><rect x="279.0" y="254.7" width="2.7" height="0.8" fill="#fff3c0" opacity="0.63"/><rect x="267.5" y="339.4" width="3.9" height="0.8" fill="#fff3c0" opacity="0.68"/><rect x="361.9" y="313.5" width="2.2" height="0.8" fill="#fff3c0" opacity="0.38"/><rect x="299.5" y="319.3" width="2.9" height="0.8" fill="#fdeca0" opacity="0.56"/><rect x="371.8" y="264.8" width="4.0" height="0.8" fill="#fdeca0" opacity="0.46"/><rect x="279.9" y="325.4" width="2.5" height="0.8" fill="#fff3c0" opacity="0.73"/><rect x="271.6" y="279.9" width="2.2" height="0.8" fill="#fdeca0" opacity="0.54"/><rect x="302.8" y="232.4" width="3.0" height="0.8" fill="#fff3c0" opacity="0.48"/><rect x="332.2" y="255.8" width="3.8" height="0.8" fill="#fdeca0" opacity="0.36"/><rect x="242.1" y="268.1" width="3.6" height="0.8" fill="#fff3c0" opacity="0.74"/><rect x="298.9" y="264.3" width="4.4" height="0.8" fill="#fdeca0" opacity="0.73"/><rect x="316.4" y="236.4" width="4.6" height="0.8" fill="#fff3c0" opacity="0.39"/><rect x="242.3" y="228.5" width="3.6" height="0.8" fill="#fdeca0" opacity="0.66"/><rect x="333.5" y="242.9" width="1.8" height="0.8" fill="#fff3c0" opacity="0.43"/><rect x="307.1" y="300.0" width="1.7" height="0.8" fill="#fdeca0" opacity="0.45"/><rect x="379.0" y="270.4" width="4.4" height="0.8" fill="#fdeca0" opacity="0.64"/><rect x="379.7" y="232.7" width="3.1" height="0.8" fill="#fdeca0" opacity="0.53"/><rect x="312.5" y="292.2" width="3.2" height="0.8" fill="#fff3c0" opacity="0.72"/><rect x="253.4" y="316.4" width="1.5" height="0.8" fill="#fff3c0" opacity="0.78"/><rect x="332.9" y="336.5" width="3.2" height="0.8" fill="#fff3c0" opacity="0.75"/><rect x="305.6" y="226.8" width="4.5" height="0.8" fill="#fdeca0" opacity="0.78"/><rect x="255.2" y="272.5" width="3.5" height="0.8" fill="#fdeca0" opacity="0.79"/><rect x="282.2" y="283.3" width="1.9" height="0.8" fill="#fdeca0" opacity="0.61"/><rect x="332.8" y="283.6" width="2.6" height="0.8" fill="#fdeca0" opacity="0.51"/><rect x="274.5" y="272.6" width="1.7" height="0.8" fill="#fff3c0" opacity="0.45"/><rect x="263.8" y="237.0" width="2.0" height="0.8" fill="#fdeca0" opacity="0.75"/><rect x="260.2" y="289.9" width="2.1" height="0.8" fill="#fdeca0" opacity="0.63"/><rect x="297.9" y="226.2" width="2.0" height="0.8" fill="#fff3c0" opacity="0.72"/><rect x="261.9" y="286.1" width="1.6" height="0.8" fill="#fff3c0" opacity="0.40"/><rect x="367.7" y="287.5" width="4.2" height="0.8" fill="#fff3c0" opacity="0.70"/><rect x="298.3" y="234.0" width="2.4" height="0.8" fill="#fff3c0" opacity="0.40"/><rect x="286.0" y="281.2" width="3.8" height="0.8" fill="#fdeca0" opacity="0.75"/><rect x="319.5" y="282.6" width="4.7" height="0.8" fill="#fff3c0" opacity="0.53"/><rect x="277.4" y="294.0" width="2.3" height="0.8" fill="#fff3c0" opacity="0.39"/><rect x="293.9" y="299.6" width="2.7" height="0.8" fill="#fff3c0" opacity="0.40"/><rect x="357.0" y="232.1" width="3.3" height="0.8" fill="#fff3c0" opacity="0.60"/><rect x="354.6" y="302.6" width="4.0" height="0.8" fill="#fff3c0" opacity="0.36"/><rect x="307.8" y="251.5" width="4.1" height="0.8" fill="#fdeca0" opacity="0.57"/><rect x="292.3" y="293.2" width="1.9" height="0.8" fill="#fff3c0" opacity="0.66"/><rect x="374.5" y="267.0" width="3.6" height="0.8" fill="#fff3c0" opacity="0.52"/><rect x="269.4" y="312.7" width="1.7" height="0.8" fill="#fdeca0" opacity="0.43"/><rect x="312.3" y="311.7" width="1.7" height="0.8" fill="#fff3c0" opacity="0.39"/><rect x="322.5" y="317.9" width="4.8" height="0.8" fill="#fff3c0" opacity="0.64"/><rect x="296.3" y="257.9" width="3.9" height="0.8" fill="#fdeca0" opacity="0.39"/><rect x="356.4" y="262.7" width="2.6" height="0.8" fill="#fff3c0" opacity="0.72"/><rect x="329.9" y="231.5" width="4.2" height="0.8" fill="#fdeca0" opacity="0.37"/><rect x="317.3" y="331.6" width="3.7" height="0.8" fill="#fdeca0" opacity="0.36"/><rect x="321.2" y="225.6" width="4.1" height="0.8" fill="#fdeca0" opacity="0.54"/><rect x="264.1" y="234.6" width="3.9" height="0.8" fill="#fff3c0" opacity="0.41"/><rect x="334.8" y="317.1" width="3.1" height="0.8" fill="#fdeca0" opacity="0.75"/><rect x="357.0" y="335.0" width="2.7" height="0.8" fill="#fdeca0" opacity="0.72"/><rect x="338.4" y="270.7" width="3.9" height="0.8" fill="#fdeca0" opacity="0.64"/><rect x="369.1" y="249.3" width="3.0" height="0.8" fill="#fdeca0" opacity="0.59"/><rect x="261.7" y="256.5" width="2.9" height="0.8" fill="#fff3c0" opacity="0.75"/><rect x="268.0" y="305.8" width="3.2" height="0.8" fill="#fff3c0" opacity="0.55"/><rect x="311.6" y="280.4" width="3.4" height="0.8" fill="#fff3c0" opacity="0.73"/><rect x="268.3" y="264.8" width="2.1" height="0.8" fill="#fff3c0" opacity="0.51"/><rect x="303.4" y="292.7" width="3.1" height="0.8" fill="#fdeca0" opacity="0.70"/><rect x="307.3" y="337.8" width="2.6" height="0.8" fill="#fdeca0" opacity="0.66"/><rect x="328.5" y="265.4" width="2.9" height="0.8" fill="#fdeca0" opacity="0.37"/><rect x="352.4" y="254.3" width="2.4" height="0.8" fill="#fdeca0" opacity="0.45"/><rect x="318.3" y="337.2" width="4.7" height="0.8" fill="#fff3c0" opacity="0.56"/><rect x="256.5" y="246.4" width="3.7" height="0.8" fill="#fdeca0" opacity="0.66"/><rect x="244.9" y="305.3" width="3.5" height="0.8" fill="#fff3c0" opacity="0.60"/><rect x="308.5" y="276.4" width="4.9" height="0.8" fill="#fff3c0" opacity="0.51"/><rect x="253.7" y="315.2" width="2.3" height="0.8" fill="#fff3c0" opacity="0.44"/><rect x="256.9" y="313.0" width="3.5" height="0.8" fill="#fff3c0" opacity="0.75"/><rect x="336.5" y="266.9" width="4.8" height="0.8" fill="#fff3c0" opacity="0.67"/><rect x="325.1" y="320.5" width="4.9" height="0.8" fill="#fff3c0" opacity="0.40"/><rect x="242.8" y="286.8" width="2.4" height="0.8" fill="#fff3c0" opacity="0.48"/><rect x="318.5" y="255.2" width="1.8" height="0.8" fill="#fff3c0" opacity="0.36"/><rect x="372.1" y="242.5" width="2.9" height="0.8" fill="#fdeca0" opacity="0.72"/><rect x="325.3" y="287.5" width="4.1" height="0.8" fill="#fff3c0" opacity="0.59"/><rect x="282.9" y="274.1" width="4.2" height="0.8" fill="#fdeca0" opacity="0.64"/><rect x="307.3" y="303.9" width="2.7" height="0.8" fill="#fff3c0" opacity="0.45"/><rect x="319.2" y="265.1" width="2.3" height="0.8" fill="#fdeca0" opacity="0.78"/><rect x="320.5" y="331.6" width="4.1" height="0.8" fill="#fdeca0" opacity="0.49"/><rect x="254.3" y="290.0" width="1.9" height="0.8" fill="#fff3c0" opacity="0.79"/><rect x="289.5" y="241.2" width="4.8" height="0.8" fill="#fdeca0" opacity="0.65"/><rect x="244.2" y="290.7" width="4.9" height="0.8" fill="#fdeca0" opacity="0.66"/><rect x="301.1" y="303.1" width="1.8" height="0.8" fill="#fff3c0" opacity="0.66"/><rect x="369.5" y="326.2" width="1.9" height="0.8" fill="#fdeca0" opacity="0.41"/><rect x="251.0" y="281.0" width="3.5" height="0.8" fill="#fdeca0" opacity="0.79"/><rect x="258.9" y="259.5" width="2.7" height="0.8" fill="#fdeca0" opacity="0.67"/><rect x="376.6" y="334.2" width="4.7" height="0.8" fill="#fdeca0" opacity="0.74"/><rect x="325.3" y="316.5" width="5.0" height="0.8" fill="#fff3c0" opacity="0.61"/><rect x="370.7" y="234.9" width="3.3" height="0.8" fill="#fdeca0" opacity="0.78"/><rect x="255.3" y="259.3" width="2.6" height="0.8" fill="#fff3c0" opacity="0.79"/><rect x="244.5" y="320.4" width="3.9" height="0.8" fill="#fdeca0" opacity="0.58"/><rect x="240.1" y="232.8" width="4.3" height="0.8" fill="#fdeca0" opacity="0.79"/><rect x="297.1" y="263.6" width="2.7" height="0.8" fill="#fdeca0" opacity="0.36"/><rect x="276.7" y="292.3" width="3.3" height="0.8" fill="#fff3c0" opacity="0.50"/><rect x="303.7" y="252.0" width="4.6" height="0.8" fill="#fdeca0" opacity="0.43"/><rect x="269.6" y="276.9" width="2.3" height="0.8" fill="#fdeca0" opacity="0.76"/><rect x="273.4" y="300.3" width="2.4" height="0.8" fill="#fff3c0" opacity="0.59"/><rect x="320.3" y="227.6" width="2.6" height="0.8" fill="#fff3c0" opacity="0.38"/><rect x="343.5" y="248.5" width="1.6" height="0.8" fill="#fdeca0" opacity="0.46"/><rect x="251.0" y="312.8" width="2.4" height="0.8" fill="#fff3c0" opacity="0.45"/><rect x="318.0" y="240.9" width="3.8" height="0.8" fill="#fdeca0" opacity="0.38"/><rect x="378.7" y="269.5" width="2.0" height="0.8" fill="#fdeca0" opacity="0.71"/><rect x="287.3" y="315.9" width="2.8" height="0.8" fill="#fdeca0" opacity="0.48"/><rect x="306.6" y="319.1" width="1.5" height="0.8" fill="#fff3c0" opacity="0.57"/><rect x="373.6" y="273.9" width="2.1" height="0.8" fill="#fdeca0" opacity="0.38"/><rect x="362.9" y="335.5" width="4.8" height="0.8" fill="#fdeca0" opacity="0.50"/><rect x="259.8" y="307.2" width="4.8" height="0.8" fill="#fdeca0" opacity="0.44"/><rect x="338.2" y="252.3" width="4.5" height="0.8" fill="#fff3c0" opacity="0.75"/><rect x="291.4" y="308.6" width="4.7" height="0.8" fill="#fdeca0" opacity="0.42"/><rect x="377.7" y="308.4" width="3.9" height="0.8" fill="#fff3c0" opacity="0.41"/><rect x="265.6" y="239.1" width="3.3" height="0.8" fill="#fff3c0" opacity="0.59"/><rect x="346.7" y="285.6" width="4.8" height="0.8" fill="#fdeca0" opacity="0.39"/><rect x="242.3" y="331.0" width="4.9" height="0.8" fill="#fdeca0" opacity="0.77"/><rect x="262.4" y="263.0" width="3.5" height="0.8" fill="#fff3c0" opacity="0.48"/><rect x="289.0" y="339.7" width="3.2" height="0.8" fill="#fdeca0" opacity="0.37"/><rect x="372.2" y="337.5" width="1.6" height="0.8" fill="#fff3c0" opacity="0.69"/><rect x="316.1" y="257.4" width="1.7" height="0.8" fill="#fdeca0" opacity="0.53"/><rect x="374.6" y="227.8" width="3.0" height="0.8" fill="#fdeca0" opacity="0.78"/><rect x="305.1" y="246.0" width="1.6" height="0.8" fill="#fdeca0" opacity="0.49"/><rect x="287.1" y="322.5" width="3.5" height="0.8" fill="#fff3c0" opacity="0.66"/><rect x="327.3" y="261.5" width="2.7" height="0.8" fill="#fff3c0" opacity="0.75"/><rect x="300.1" y="292.5" width="2.4" height="0.8" fill="#fff3c0" opacity="0.78"/><rect x="272.7" y="332.6" width="4.5" height="0.8" fill="#fdeca0" opacity="0.75"/><rect x="305.6" y="289.6" width="4.7" height="0.8" fill="#fff3c0" opacity="0.69"/><rect x="272.9" y="292.1" width="2.1" height="0.8" fill="#fff3c0" opacity="0.78"/><rect x="329.4" y="297.9" width="1.5" height="0.8" fill="#fdeca0" opacity="0.57"/><rect x="309.6" y="331.1" width="3.3" height="0.8" fill="#fdeca0" opacity="0.52"/><rect x="332.8" y="271.1" width="3.2" height="0.8" fill="#fff3c0" opacity="0.73"/><rect x="247.9" y="261.7" width="3.7" height="0.8" fill="#fdeca0" opacity="0.38"/><rect x="375.8" y="257.2" width="3.0" height="0.8" fill="#fdeca0" opacity="0.39"/><rect x="272.8" y="320.3" width="4.3" height="0.8" fill="#fdeca0" opacity="0.46"/><rect x="299.7" y="288.8" width="4.8" height="0.8" fill="#fff3c0" opacity="0.57"/><rect x="261.2" y="261.3" width="3.8" height="0.8" fill="#fdeca0" opacity="0.58"/><rect x="330.5" y="304.3" width="3.1" height="0.8" fill="#fdeca0" opacity="0.48"/><rect x="335.9" y="316.7" width="4.0" height="0.8" fill="#fdeca0" opacity="0.71"/><rect x="256.5" y="279.7" width="4.0" height="0.8" fill="#fdeca0" opacity="0.37"/><rect x="373.9" y="300.7" width="3.1" height="0.8" fill="#fff3c0" opacity="0.64"/><rect x="370.6" y="299.1" width="1.7" height="0.8" fill="#fdeca0" opacity="0.65"/><rect x="276.4" y="258.1" width="2.9" height="0.8" fill="#fff3c0" opacity="0.46"/><rect x="377.9" y="296.6" width="1.9" height="0.8" fill="#fdeca0" opacity="0.68"/><rect x="301.1" y="271.9" width="2.9" height="0.8" fill="#fdeca0" opacity="0.69"/><rect x="319.7" y="333.5" width="3.7" height="0.8" fill="#fff3c0" opacity="0.57"/><rect x="339.5" y="229.5" width="4.6" height="0.8" fill="#fdeca0" opacity="0.57"/><rect x="272.3" y="296.1" width="1.9" height="0.8" fill="#fff3c0" opacity="0.42"/><rect x="284.2" y="256.4" width="2.2" height="0.8" fill="#fdeca0" opacity="0.64"/><rect x="286.3" y="331.6" width="4.7" height="0.8" fill="#fff3c0" opacity="0.48"/><rect x="374.8" y="314.0" width="2.7" height="0.8" fill="#fff3c0" opacity="0.48"/><rect x="249.2" y="236.1" width="4.0" height="0.8" fill="#fdeca0" opacity="0.37"/><rect x="280.4" y="332.3" width="2.8" height="0.8" fill="#fff3c0" opacity="0.55"/><rect x="249.8" y="231.0" width="2.7" height="0.8" fill="#fff3c0" opacity="0.59"/><rect x="270.2" y="330.8" width="4.3" height="0.8" fill="#fdeca0" opacity="0.76"/><rect x="257.1" y="274.8" width="3.9" height="0.8" fill="#fff3c0" opacity="0.69"/><rect x="322.1" y="273.3" width="1.5" height="0.8" fill="#fdeca0" opacity="0.39"/><rect x="347.3" y="231.6" width="2.0" height="0.8" fill="#fff3c0" opacity="0.60"/><rect x="350.2" y="292.2" width="4.8" height="0.8" fill="#fdeca0" opacity="0.47"/><rect x="338.8" y="277.5" width="3.0" height="0.8" fill="#fff3c0" opacity="0.40"/><rect x="267.1" y="254.1" width="4.7" height="0.8" fill="#fdeca0" opacity="0.60"/><rect x="277.7" y="304.9" width="3.0" height="0.8" fill="#fff3c0" opacity="0.41"/><rect x="309.8" y="315.2" width="2.4" height="0.8" fill="#fdeca0" opacity="0.72"/></g>
 <path d="M315,230.5 C350,231 373,262 372.3,292 C372.5,314 370,327 348.8,334.1 C340,337 325,337 311.9,336 C295,335 281,330 263.6,318 C254,310 248.5,298 248.7,286 C249,254 278,230 315,230.5 Z" fill="none" stroke="#000" stroke-width="1.5"/>
 <path d="M255,286 C255,282 259,280.5 263,280.7 C267,281 270,284 269.8,287 C269.5,290 266,292 262,292 C258,292 255,289.5 255,286 Z" fill="#f99a30"/>
 <ellipse cx="356.1" cy="309.5" rx="7" ry="5.4" fill="#f99a30"/>
 <ellipse cx="273.2" cy="271.4" rx="7.2" ry="8.3" fill="#000"/>
 <ellipse cx="355.4" cy="291.5" rx="6.8" ry="8.8" fill="#000"/>
 <path d="M307.3,285 C307,290 308.5,296 312.8,296 C317,296 320,291 321.5,286" stroke="#000" stroke-width="3.4" fill="none" stroke-linecap="round"/>
 <path d="M320,287 L321.5,283.5 L324,287.5 Z" fill="#000"/>
 <path d="M236.4,180 L236.4,308" stroke="#000" stroke-width="3.1" fill="none"/>
 <path d="M231,309 C231,305 237,305 238,309 C239,314 238,319 236,322 L233,322 C231,318 230.5,313 231,309 Z" fill="#000"/>
 <path d="M235,319 C237,323 240,326 244,329 C247,331 250,333 253,335" stroke="#000" stroke-width="4" fill="none" stroke-linecap="round"/>
 <path d="M233.5,320 C233,328 232,336 229.5,343 C227.5,348 224,349.5 222,349" stroke="#000" stroke-width="3.6" fill="none" stroke-linecap="round"/>
 <path d="M236,138.5 C232,133 227,131 221,131 C213,131 207.5,138 207.5,146.5 C207.5,156 214,164 222,170.5 C228,175 233,178 236.4,180.5 C240,178 245,175 250,170 C257,163 262.5,155 262.5,145 C262.5,136 256,130 249,130 C243,130 239,133 236,138.5 Z" fill="#ff0000"/>
 <g clip-path="url(#hc)"><rect x="232.1" y="158.2" width="3.3" height="0.7" fill="#ffbcbc" opacity="0.61"/><rect x="256.3" y="138.3" width="3.0" height="0.7" fill="#ffbcbc" opacity="0.61"/><rect x="252.6" y="133.1" width="1.9" height="0.7" fill="#ffbcbc" opacity="0.44"/><rect x="243.1" y="160.2" width="2.1" height="0.7" fill="#ffbcbc" opacity="0.60"/><rect x="241.9" y="136.5" width="1.2" height="0.7" fill="#ffffff" opacity="0.64"/><rect x="207.1" y="175.5" width="2.6" height="0.7" fill="#ffd6d6" opacity="0.75"/><rect x="231.4" y="173.5" width="2.4" height="0.7" fill="#ffd6d6" opacity="0.69"/><rect x="205.3" y="132.6" width="2.7" height="0.7" fill="#ffbcbc" opacity="0.58"/><rect x="264.7" y="173.4" width="2.8" height="0.7" fill="#ffffff" opacity="0.54"/><rect x="235.8" y="129.6" width="2.5" height="0.7" fill="#ffffff" opacity="0.45"/><rect x="255.8" y="148.9" width="3.4" height="0.7" fill="#ffffff" opacity="0.78"/><rect x="217.8" y="178.1" width="1.3" height="0.7" fill="#ffbcbc" opacity="0.57"/><rect x="228.8" y="131.9" width="2.6" height="0.7" fill="#ffd6d6" opacity="0.75"/><rect x="225.2" y="144.8" width="1.2" height="0.7" fill="#ffffff" opacity="0.58"/><rect x="213.1" y="166.2" width="1.2" height="0.7" fill="#ffd6d6" opacity="0.61"/><rect x="215.7" y="158.2" width="2.2" height="0.7" fill="#ffbcbc" opacity="0.49"/><rect x="251.2" y="150.6" width="2.1" height="0.7" fill="#ffffff" opacity="0.58"/><rect x="205.0" y="174.7" width="3.4" height="0.7" fill="#ffffff" opacity="0.67"/><rect x="217.6" y="149.3" width="3.2" height="0.7" fill="#ffffff" opacity="0.69"/><rect x="207.5" y="135.9" width="2.2" height="0.7" fill="#ffbcbc" opacity="0.40"/><rect x="224.7" y="144.0" width="1.4" height="0.7" fill="#ffbcbc" opacity="0.44"/><rect x="243.2" y="128.8" width="2.0" height="0.7" fill="#ffffff" opacity="0.68"/><rect x="262.5" y="154.1" width="2.5" height="0.7" fill="#ffffff" opacity="0.79"/><rect x="242.6" y="144.8" width="1.7" height="0.7" fill="#ffbcbc" opacity="0.67"/><rect x="216.4" y="167.9" width="3.4" height="0.7" fill="#ffd6d6" opacity="0.49"/><rect x="257.9" y="160.6" width="2.2" height="0.7" fill="#ffffff" opacity="0.45"/><rect x="235.7" y="141.8" width="2.9" height="0.7" fill="#ffd6d6" opacity="0.58"/><rect x="254.4" y="160.2" width="1.9" height="0.7" fill="#ffbcbc" opacity="0.48"/><rect x="263.6" y="134.8" width="2.3" height="0.7" fill="#ffbcbc" opacity="0.69"/><rect x="241.9" y="143.1" width="3.3" height="0.7" fill="#ffffff" opacity="0.49"/><rect x="209.1" y="150.2" width="1.8" height="0.7" fill="#ffd6d6" opacity="0.42"/><rect x="227.1" y="158.9" width="1.5" height="0.7" fill="#ffd6d6" opacity="0.56"/><rect x="263.8" y="163.5" width="2.8" height="0.7" fill="#ffffff" opacity="0.66"/><rect x="240.4" y="177.9" width="2.3" height="0.7" fill="#ffd6d6" opacity="0.56"/><rect x="262.8" y="129.1" width="2.7" height="0.7" fill="#ffbcbc" opacity="0.62"/><rect x="223.7" y="135.4" width="1.4" height="0.7" fill="#ffd6d6" opacity="0.60"/><rect x="249.2" y="176.6" width="2.9" height="0.7" fill="#ffd6d6" opacity="0.72"/><rect x="226.1" y="165.0" width="3.3" height="0.7" fill="#ffd6d6" opacity="0.79"/><rect x="261.7" y="129.6" width="2.3" height="0.7" fill="#ffbcbc" opacity="0.41"/><rect x="227.9" y="159.5" width="2.6" height="0.7" fill="#ffbcbc" opacity="0.44"/><rect x="211.9" y="141.9" width="2.2" height="0.7" fill="#ffbcbc" opacity="0.55"/><rect x="246.6" y="152.7" width="2.3" height="0.7" fill="#ffbcbc" opacity="0.64"/><rect x="250.0" y="129.6" width="2.6" height="0.7" fill="#ffffff" opacity="0.62"/><rect x="262.4" y="134.1" width="3.0" height="0.7" fill="#ffd6d6" opacity="0.70"/><rect x="220.3" y="128.6" width="1.9" height="0.7" fill="#ffffff" opacity="0.71"/><rect x="236.1" y="168.7" width="2.0" height="0.7" fill="#ffd6d6" opacity="0.82"/><rect x="258.5" y="145.7" width="2.7" height="0.7" fill="#ffd6d6" opacity="0.49"/><rect x="253.2" y="168.8" width="1.7" height="0.7" fill="#ffffff" opacity="0.50"/><rect x="240.0" y="145.1" width="1.5" height="0.7" fill="#ffffff" opacity="0.62"/><rect x="247.7" y="179.3" width="1.8" height="0.7" fill="#ffd6d6" opacity="0.48"/><rect x="233.3" y="178.0" width="3.1" height="0.7" fill="#ffbcbc" opacity="0.57"/><rect x="234.6" y="145.0" width="3.1" height="0.7" fill="#ffd6d6" opacity="0.84"/><rect x="224.2" y="172.8" width="1.8" height="0.7" fill="#ffbcbc" opacity="0.67"/><rect x="247.5" y="158.8" width="1.9" height="0.7" fill="#ffffff" opacity="0.76"/><rect x="243.5" y="149.9" width="1.6" height="0.7" fill="#ffd6d6" opacity="0.75"/><rect x="219.2" y="135.6" width="1.3" height="0.7" fill="#ffd6d6" opacity="0.68"/><rect x="211.5" y="156.9" width="2.7" height="0.7" fill="#ffffff" opacity="0.57"/><rect x="246.1" y="138.8" width="2.3" height="0.7" fill="#ffffff" opacity="0.48"/><rect x="250.3" y="156.9" width="1.3" height="0.7" fill="#ffd6d6" opacity="0.50"/><rect x="237.4" y="179.1" width="2.4" height="0.7" fill="#ffffff" opacity="0.85"/><rect x="228.6" y="170.8" width="3.3" height="0.7" fill="#ffbcbc" opacity="0.44"/><rect x="228.3" y="152.3" width="1.7" height="0.7" fill="#ffffff" opacity="0.80"/><rect x="227.6" y="158.7" width="3.2" height="0.7" fill="#ffd6d6" opacity="0.76"/><rect x="232.8" y="163.2" width="1.7" height="0.7" fill="#ffbcbc" opacity="0.72"/><rect x="260.5" y="134.7" width="1.8" height="0.7" fill="#ffffff" opacity="0.58"/><rect x="263.6" y="157.0" width="3.0" height="0.7" fill="#ffbcbc" opacity="0.54"/><rect x="256.3" y="146.8" width="1.4" height="0.7" fill="#ffbcbc" opacity="0.60"/><rect x="230.3" y="142.9" width="3.3" height="0.7" fill="#ffffff" opacity="0.50"/><rect x="230.7" y="129.9" width="2.4" height="0.7" fill="#ffffff" opacity="0.71"/><rect x="233.2" y="182.0" width="3.3" height="0.7" fill="#ffbcbc" opacity="0.63"/><rect x="246.4" y="179.1" width="2.3" height="0.7" fill="#ffffff" opacity="0.83"/><rect x="250.5" y="151.7" width="2.5" height="0.7" fill="#ffbcbc" opacity="0.77"/><rect x="243.3" y="156.2" width="3.1" height="0.7" fill="#ffd6d6" opacity="0.65"/><rect x="245.3" y="179.6" width="3.2" height="0.7" fill="#ffd6d6" opacity="0.67"/><rect x="256.0" y="180.3" width="2.4" height="0.7" fill="#ffffff" opacity="0.66"/><rect x="229.7" y="134.2" width="1.2" height="0.7" fill="#ffbcbc" opacity="0.57"/><rect x="263.2" y="155.9" width="2.1" height="0.7" fill="#ffbcbc" opacity="0.76"/><rect x="212.3" y="133.0" width="1.6" height="0.7" fill="#ffd6d6" opacity="0.82"/><rect x="229.8" y="179.7" width="3.3" height="0.7" fill="#ffd6d6" opacity="0.52"/><rect x="234.6" y="146.3" width="3.3" height="0.7" fill="#ffd6d6" opacity="0.82"/><rect x="236.5" y="133.9" width="2.2" height="0.7" fill="#ffd6d6" opacity="0.41"/><rect x="212.8" y="170.1" width="1.3" height="0.7" fill="#ffffff" opacity="0.49"/><rect x="205.7" y="143.3" width="2.9" height="0.7" fill="#ffd6d6" opacity="0.51"/><rect x="211.3" y="167.5" width="1.5" height="0.7" fill="#ffd6d6" opacity="0.63"/><rect x="248.1" y="165.9" width="3.2" height="0.7" fill="#ffbcbc" opacity="0.41"/><rect x="229.8" y="156.6" width="1.6" height="0.7" fill="#ffbcbc" opacity="0.49"/><rect x="237.0" y="139.8" width="1.7" height="0.7" fill="#ffbcbc" opacity="0.64"/><rect x="256.4" y="140.6" width="2.9" height="0.7" fill="#ffffff" opacity="0.76"/><rect x="224.0" y="145.0" width="3.3" height="0.7" fill="#ffffff" opacity="0.50"/><rect x="258.3" y="135.2" width="1.8" height="0.7" fill="#ffd6d6" opacity="0.73"/><rect x="228.3" y="151.5" width="3.4" height="0.7" fill="#ffbcbc" opacity="0.64"/><rect x="212.6" y="149.8" width="2.8" height="0.7" fill="#ffffff" opacity="0.41"/><rect x="239.2" y="147.3" width="3.1" height="0.7" fill="#ffbcbc" opacity="0.56"/><rect x="235.3" y="168.9" width="2.4" height="0.7" fill="#ffffff" opacity="0.71"/><rect x="253.2" y="154.0" width="1.3" height="0.7" fill="#ffbcbc" opacity="0.74"/><rect x="235.9" y="158.7" width="1.5" height="0.7" fill="#ffffff" opacity="0.48"/><rect x="215.3" y="136.5" width="1.9" height="0.7" fill="#ffbcbc" opacity="0.70"/><rect x="208.7" y="179.4" width="2.3" height="0.7" fill="#ffd6d6" opacity="0.74"/><rect x="228.5" y="151.0" width="2.0" height="0.7" fill="#ffd6d6" opacity="0.49"/><rect x="205.8" y="165.9" width="3.1" height="0.7" fill="#ffd6d6" opacity="0.48"/><rect x="226.6" y="148.0" width="3.3" height="0.7" fill="#ffffff" opacity="0.67"/><rect x="235.8" y="128.8" width="3.3" height="0.7" fill="#ffbcbc" opacity="0.76"/><rect x="257.5" y="177.1" width="3.4" height="0.7" fill="#ffffff" opacity="0.66"/><rect x="235.3" y="181.1" width="3.1" height="0.7" fill="#ffffff" opacity="0.52"/><rect x="249.7" y="170.0" width="3.1" height="0.7" fill="#ffd6d6" opacity="0.58"/><rect x="257.8" y="165.5" width="3.0" height="0.7" fill="#ffd6d6" opacity="0.74"/><rect x="217.4" y="138.0" width="3.0" height="0.7" fill="#ffffff" opacity="0.54"/><rect x="205.6" y="147.2" width="2.7" height="0.7" fill="#ffffff" opacity="0.68"/><rect x="221.4" y="179.9" width="1.9" height="0.7" fill="#ffd6d6" opacity="0.50"/><rect x="239.2" y="156.8" width="2.1" height="0.7" fill="#ffbcbc" opacity="0.85"/><rect x="217.8" y="134.5" width="2.1" height="0.7" fill="#ffffff" opacity="0.66"/><rect x="241.9" y="167.9" width="1.8" height="0.7" fill="#ffffff" opacity="0.58"/><rect x="250.7" y="163.0" width="1.2" height="0.7" fill="#ffd6d6" opacity="0.52"/><rect x="259.3" y="157.7" width="2.4" height="0.7" fill="#ffbcbc" opacity="0.84"/><rect x="255.8" y="133.4" width="2.2" height="0.7" fill="#ffbcbc" opacity="0.69"/><rect x="240.9" y="169.0" width="1.3" height="0.7" fill="#ffffff" opacity="0.82"/><rect x="228.2" y="180.4" width="3.2" height="0.7" fill="#ffbcbc" opacity="0.64"/><rect x="208.5" y="179.0" width="2.2" height="0.7" fill="#ffbcbc" opacity="0.64"/><rect x="223.7" y="156.6" width="2.3" height="0.7" fill="#ffd6d6" opacity="0.52"/><rect x="244.8" y="168.4" width="1.3" height="0.7" fill="#ffbcbc" opacity="0.75"/><rect x="207.6" y="136.5" width="2.9" height="0.7" fill="#ffd6d6" opacity="0.58"/><rect x="249.9" y="130.7" width="3.5" height="0.7" fill="#ffffff" opacity="0.83"/><rect x="252.9" y="140.1" width="2.9" height="0.7" fill="#ffffff" opacity="0.51"/><rect x="207.7" y="133.3" width="3.1" height="0.7" fill="#ffffff" opacity="0.81"/><rect x="263.7" y="172.1" width="2.6" height="0.7" fill="#ffbcbc" opacity="0.45"/><rect x="230.0" y="134.4" width="3.2" height="0.7" fill="#ffffff" opacity="0.56"/><rect x="212.5" y="151.9" width="2.7" height="0.7" fill="#ffd6d6" opacity="0.60"/><rect x="243.4" y="164.8" width="2.0" height="0.7" fill="#ffffff" opacity="0.73"/><rect x="262.2" y="167.7" width="1.7" height="0.7" fill="#ffd6d6" opacity="0.45"/><rect x="252.1" y="161.7" width="2.0" height="0.7" fill="#ffbcbc" opacity="0.52"/><rect x="248.5" y="165.7" width="1.6" height="0.7" fill="#ffffff" opacity="0.53"/><rect x="216.4" y="141.4" width="3.5" height="0.7" fill="#ffbcbc" opacity="0.81"/><rect x="207.4" y="131.3" width="1.8" height="0.7" fill="#ffbcbc" opacity="0.59"/><rect x="207.3" y="140.0" width="1.8" height="0.7" fill="#ffbcbc" opacity="0.74"/><rect x="214.7" y="140.7" width="3.5" height="0.7" fill="#ffd6d6" opacity="0.62"/><rect x="217.6" y="146.6" width="2.9" height="0.7" fill="#ffffff" opacity="0.78"/><rect x="253.1" y="152.2" width="3.1" height="0.7" fill="#ffffff" opacity="0.78"/><rect x="231.7" y="168.4" width="2.1" height="0.7" fill="#ffffff" opacity="0.47"/><rect x="244.2" y="181.4" width="1.9" height="0.7" fill="#ffbcbc" opacity="0.65"/><rect x="254.6" y="137.9" width="2.7" height="0.7" fill="#ffd6d6" opacity="0.66"/><rect x="257.5" y="132.2" width="1.4" height="0.7" fill="#ffd6d6" opacity="0.65"/><rect x="253.9" y="153.0" width="3.1" height="0.7" fill="#ffd6d6" opacity="0.40"/><rect x="217.8" y="163.8" width="1.4" height="0.7" fill="#ffbcbc" opacity="0.54"/><rect x="250.8" y="145.7" width="3.2" height="0.7" fill="#ffbcbc" opacity="0.50"/><rect x="248.6" y="147.8" width="1.5" height="0.7" fill="#ffbcbc" opacity="0.72"/><rect x="240.7" y="176.7" width="2.8" height="0.7" fill="#ffbcbc" opacity="0.53"/><rect x="253.2" y="144.5" width="1.9" height="0.7" fill="#ffbcbc" opacity="0.58"/><rect x="258.7" y="141.4" width="2.0" height="0.7" fill="#ffd6d6" opacity="0.56"/><rect x="245.6" y="159.6" width="3.0" height="0.7" fill="#ffd6d6" opacity="0.73"/><rect x="252.8" y="157.2" width="3.1" height="0.7" fill="#ffffff" opacity="0.65"/><rect x="210.4" y="152.5" width="3.2" height="0.7" fill="#ffffff" opacity="0.77"/><rect x="235.9" y="157.4" width="2.5" height="0.7" fill="#ffbcbc" opacity="0.83"/><rect x="255.5" y="150.8" width="2.5" height="0.7" fill="#ffbcbc" opacity="0.54"/><rect x="210.0" y="132.4" width="2.9" height="0.7" fill="#ffffff" opacity="0.80"/><rect x="206.6" y="163.3" width="1.4" height="0.7" fill="#ffd6d6" opacity="0.77"/><rect x="219.7" y="139.9" width="3.0" height="0.7" fill="#ffd6d6" opacity="0.63"/><rect x="228.7" y="146.2" width="3.4" height="0.7" fill="#ffd6d6" opacity="0.70"/><rect x="234.3" y="171.5" width="1.4" height="0.7" fill="#ffffff" opacity="0.68"/><rect x="229.6" y="172.6" width="2.7" height="0.7" fill="#ffd6d6" opacity="0.78"/><rect x="255.0" y="176.0" width="3.4" height="0.7" fill="#ffbcbc" opacity="0.69"/><rect x="226.7" y="128.5" width="1.5" height="0.7" fill="#ffffff" opacity="0.82"/><rect x="219.7" y="136.8" width="2.7" height="0.7" fill="#ffd6d6" opacity="0.71"/><rect x="217.3" y="150.9" width="1.9" height="0.7" fill="#ffffff" opacity="0.84"/><rect x="233.3" y="167.5" width="1.9" height="0.7" fill="#ffffff" opacity="0.47"/><rect x="259.7" y="168.7" width="1.2" height="0.7" fill="#ffffff" opacity="0.62"/><rect x="223.8" y="138.7" width="2.0" height="0.7" fill="#ffbcbc" opacity="0.66"/><rect x="248.0" y="160.1" width="1.7" height="0.7" fill="#ffd6d6" opacity="0.48"/><rect x="229.1" y="177.2" width="3.4" height="0.7" fill="#ffbcbc" opacity="0.68"/><rect x="233.8" y="142.1" width="3.2" height="0.7" fill="#ffd6d6" opacity="0.81"/><rect x="244.6" y="169.7" width="1.4" height="0.7" fill="#ffd6d6" opacity="0.79"/><rect x="208.0" y="179.2" width="3.0" height="0.7" fill="#ffbcbc" opacity="0.57"/><rect x="252.7" y="169.8" width="3.0" height="0.7" fill="#ffffff" opacity="0.43"/><rect x="258.5" y="175.2" width="3.3" height="0.7" fill="#ffffff" opacity="0.60"/><rect x="247.8" y="160.7" width="1.6" height="0.7" fill="#ffd6d6" opacity="0.47"/><rect x="213.7" y="177.0" width="3.1" height="0.7" fill="#ffbcbc" opacity="0.46"/><rect x="264.6" y="142.4" width="2.4" height="0.7" fill="#ffffff" opacity="0.47"/><rect x="205.1" y="172.4" width="3.1" height="0.7" fill="#ffffff" opacity="0.77"/><rect x="226.1" y="161.2" width="2.4" height="0.7" fill="#ffbcbc" opacity="0.80"/><rect x="233.1" y="179.6" width="2.5" height="0.7" fill="#ffd6d6" opacity="0.79"/><rect x="206.1" y="138.1" width="1.6" height="0.7" fill="#ffd6d6" opacity="0.71"/><rect x="217.5" y="157.3" width="2.4" height="0.7" fill="#ffd6d6" opacity="0.47"/><rect x="224.0" y="149.9" width="2.5" height="0.7" fill="#ffbcbc" opacity="0.85"/><rect x="247.9" y="147.4" width="2.8" height="0.7" fill="#ffd6d6" opacity="0.45"/><rect x="245.6" y="168.3" width="3.0" height="0.7" fill="#ffd6d6" opacity="0.45"/><rect x="205.7" y="148.4" width="2.8" height="0.7" fill="#ffbcbc" opacity="0.51"/><rect x="211.8" y="169.7" width="3.2" height="0.7" fill="#ffbcbc" opacity="0.78"/><rect x="217.4" y="161.3" width="1.9" height="0.7" fill="#ffbcbc" opacity="0.57"/><rect x="250.0" y="179.5" width="2.9" height="0.7" fill="#ffffff" opacity="0.65"/><rect x="220.4" y="138.8" width="2.9" height="0.7" fill="#ffd6d6" opacity="0.55"/><rect x="238.8" y="167.1" width="2.0" height="0.7" fill="#ffffff" opacity="0.77"/><rect x="211.1" y="161.6" width="1.5" height="0.7" fill="#ffffff" opacity="0.68"/><rect x="215.8" y="149.7" width="3.1" height="0.7" fill="#ffffff" opacity="0.67"/><rect x="211.0" y="129.7" width="3.5" height="0.7" fill="#ffffff" opacity="0.60"/><rect x="225.5" y="172.5" width="3.3" height="0.7" fill="#ffffff" opacity="0.46"/><rect x="251.0" y="172.3" width="2.1" height="0.7" fill="#ffd6d6" opacity="0.55"/><rect x="242.4" y="167.3" width="2.6" height="0.7" fill="#ffffff" opacity="0.54"/><rect x="244.6" y="160.9" width="1.2" height="0.7" fill="#ffd6d6" opacity="0.55"/><rect x="223.4" y="151.8" width="2.5" height="0.7" fill="#ffd6d6" opacity="0.49"/><rect x="252.3" y="172.6" width="2.6" height="0.7" fill="#ffbcbc" opacity="0.47"/><rect x="259.2" y="157.6" width="2.0" height="0.7" fill="#ffffff" opacity="0.63"/><rect x="239.4" y="138.7" width="3.3" height="0.7" fill="#ffbcbc" opacity="0.85"/><rect x="255.1" y="138.6" width="3.4" height="0.7" fill="#ffffff" opacity="0.68"/><rect x="251.6" y="135.4" width="2.3" height="0.7" fill="#ffd6d6" opacity="0.59"/><rect x="224.8" y="178.2" width="2.0" height="0.7" fill="#ffffff" opacity="0.61"/><rect x="232.1" y="167.4" width="1.7" height="0.7" fill="#ffbcbc" opacity="0.66"/><rect x="238.6" y="158.3" width="1.8" height="0.7" fill="#ffd6d6" opacity="0.81"/><rect x="241.1" y="134.6" width="3.1" height="0.7" fill="#ffd6d6" opacity="0.53"/><rect x="219.5" y="159.0" width="3.1" height="0.7" fill="#ffbcbc" opacity="0.48"/><rect x="253.7" y="152.5" width="2.1" height="0.7" fill="#ffbcbc" opacity="0.75"/><rect x="213.3" y="168.8" width="3.1" height="0.7" fill="#ffbcbc" opacity="0.81"/><rect x="240.5" y="171.4" width="1.2" height="0.7" fill="#ffd6d6" opacity="0.49"/><rect x="207.0" y="156.5" width="1.5" height="0.7" fill="#ffd6d6" opacity="0.58"/><rect x="236.2" y="142.2" width="2.5" height="0.7" fill="#ffbcbc" opacity="0.55"/><rect x="252.0" y="167.0" width="3.0" height="0.7" fill="#ffd6d6" opacity="0.58"/><rect x="241.0" y="153.4" width="2.1" height="0.7" fill="#ffbcbc" opacity="0.68"/><rect x="238.9" y="150.0" width="1.8" height="0.7" fill="#ffd6d6" opacity="0.80"/><rect x="255.3" y="174.2" width="2.1" height="0.7" fill="#ffbcbc" opacity="0.60"/><rect x="211.9" y="178.7" width="2.0" height="0.7" fill="#ffd6d6" opacity="0.63"/><rect x="259.3" y="145.3" width="1.3" height="0.7" fill="#ffd6d6" opacity="0.73"/><rect x="248.9" y="160.3" width="2.9" height="0.7" fill="#ffbcbc" opacity="0.54"/></g>
 <path d="M234.3,182.5 L236.4,177.5 L238.5,182.5 Z" fill="#000"/>
 <line x1="236.5" y1="181" x2="276.5" y2="270.5" stroke="#c4c4c4" stroke-width="0.9" stroke-dasharray="2,1"/>
 <polyline points="273.5,262 276.7,270.4 275.2,273.5 279.8,273" stroke="#fff" stroke-width="1.3" fill="none"/>
 <line x1="279.8" y1="273" x2="355.3" y2="290.7" stroke="#f6f4ea" stroke-width="1.4" stroke-dasharray="4,1"/>
 <path d="M356,289 C359,288.5 361,291 359.5,293.5 C358.5,295 356.5,295 355.5,294.5" stroke="#fff" stroke-width="1.2" fill="none"/>
 <line x1="236.5" y1="181" x2="350.2" y2="297.9" stroke="#f02020" stroke-width="0.9" stroke-dasharray="4,1"/>
 <line x1="274.7" y1="278.6" x2="307" y2="285.5" stroke="#3a3420" stroke-width="0.9"/>
 <line x1="322.2" y1="287" x2="348.1" y2="294.3" stroke="#3a3420" stroke-width="0.9"/>
 <line x1="322" y1="231" x2="343.4" y2="335" stroke="#3a3420" stroke-width="0.9" stroke-dasharray="3,1"/>
 <path d="M319.5,233.5 L321.5,228.5 L323.5,233.5 Z" fill="#222"/>
 <polyline points="270.5,279.7 269.5,289.5 265.4,319" stroke="#3a3420" stroke-width="0.9" fill="none" stroke-dasharray="3,1"/>
 <circle cx="269.5" cy="289.5" r="1.3" fill="#5a3a10"/>
 <line x1="270.5" y1="289.5" x2="355.3" y2="291.2" stroke="#f29a50" stroke-width="0.9" stroke-dasharray="4,1"/>
 <line x1="270.5" y1="289.5" x2="350.2" y2="310.3" stroke="#e8a070" stroke-width="0.9" stroke-dasharray="3,1"/>
 <circle cx="349.5" cy="310.5" r="1.2" fill="#5a3a10"/>
 <rect x="253" y="0" width="1" height="579" fill="#00ff00"/>
 <rect x="348" y="0" width="1" height="579" fill="#ff0000"/>
 <rect x="0" y="308" width="606" height="1" fill="#ff0000"/>
 <rect x="0" y="331" width="606" height="1" fill="#00ff00"/>
</svg>
<div class="lb" style="top:0px;left:256px;color:#00ff00">1</div>
<div class="lb" style="top:321.5px;left:3px;color:#00ff00">1</div>
<div class="lb" style="top:298.5px;left:598.5px;color:#ff0000">2</div>
<div class="lb" style="top:567.5px;left:350.5px;color:#ff0000">2</div>
<div class="ln" style="left:0;top:0;width:879px;height:1px"></div>
<div class="ln" style="left:0;top:0;width:1px;height:579px"></div>
<div class="ln" style="left:878px;top:0;width:1px;height:579px"></div>
<div class="ln" style="left:0;top:578px;width:879px;height:1px"></div>
<div class="ln" style="left:606px;top:0;width:1px;height:579px"></div>
<div class="ln" style="left:606px;top:266px;width:273px;height:1px"></div>
<div class="ln" style="left:606px;top:380px;width:273px;height:1px"></div>
<div class="ln" style="left:606px;top:422px;width:273px;height:1px"></div>
<div class="t" style="top:0px;left:609px">Machine format:</div><div class="t" style="top:0px;left:689px">Tajima</div>
<div class="t" style="top:14px;left:609px">Color changes:</div><div class="t" style="top:14px;left:689px">5</div>
<div class="t" style="top:28px;left:609px">Stops:</div><div class="t" style="top:28px;left:689px">6</div>
<div class="t" style="top:42px;left:609px">Trims:</div><div class="t" style="top:42px;left:689px">11</div>
<div class="t" style="top:57px;left:609px">Appliqués:</div><div class="t" style="top:57px;left:689px">0</div>
<div class="t" style="top:71px;left:609px">Left:</div><div class="t" style="top:71px;left:689px">14.9 mm</div>
<div class="t" style="top:85px;left:609px">Right:</div><div class="t" style="top:85px;left:689px">46.4 mm</div>
<div class="t" style="top:99px;left:609px">Up:</div><div class="t" style="top:99px;left:689px">63.3 mm</div>
<div class="t" style="top:113px;left:609px">Down:</div><div class="t" style="top:113px;left:689px">36.3 mm</div>
<div class="t" style="top:127px;left:609px">EndX:</div><div class="t" style="top:127px;left:689px">30.0 mm</div>
<div class="t" style="top:141px;left:609px">EndY:</div><div class="t" style="top:141px;left:689px">7.1 mm</div>
<div class="t" style="top:156px;left:609px">Area</div><div class="t" style="top:156px;left:689px">6098.4 mm²</div>
<div class="t" style="top:170px;left:609px">Max stitch:</div><div class="t" style="top:170px;left:689px">6.8 mm</div>
<div class="t" style="top:184px;left:609px">Min stitch:</div><div class="t" style="top:184px;left:689px">0.0 mm</div>
<div class="t" style="top:198px;left:609px">Max jump:</div><div class="t" style="top:198px;left:689px">6.8 mm</div>
<div class="t" style="top:212px;left:609px">Thread chart:</div><div class="t" style="top:212px;left:689px">Janome Polyester, Madeira Classic 40,</div>
<div class="t" style="top:224px;left:689px">Default</div>
<div class="t" style="top:238px;left:609px">Total thread:</div><div class="t" style="top:238px;left:689px">30.08m</div>
<div class="t" style="top:252px;left:609px">Total bobbin:</div><div class="t" style="top:252px;left:689px">10.72m</div>
<div class="t" style="top:267px;left:609px">Stop Sequence:</div>
<div class="t b" style="top:280.8px;left:609px">#</div>
<div class="t b" style="top:280.8px;left:622px">N#</div>
<div class="t b" style="top:280.8px;left:641px">Color</div>
<div class="t b r" style="top:280.8px;right:179px">St.</div>
<div class="t b r" style="top:280.8px;right:148px">Code</div>
<div class="t b" style="top:280.8px;left:735px">Name</div>
<div class="t b" style="top:280.8px;left:787px">Chart</div>
<div class="t" style="top:295px;left:609px">1.</div>
<div class="t" style="top:295px;left:622px">1</div>
<div class="sw" style="top:295px;background:#b0e0e4"></div>
<div class="t r" style="top:295px;right:179px">762</div>
<div class="t r" style="top:295px;right:148px">228</div>
<div class="t" style="top:295px;left:735px">Baby Blue</div>
<div class="t" style="top:295px;left:787px">Janome Polyester</div>
<div class="t" style="top:309px;left:609px">2.</div>
<div class="t" style="top:309px;left:622px">2</div>
<div class="sw" style="top:310px;background:#fad42a"></div>
<div class="t r" style="top:309px;right:179px">2,892</div>
<div class="t r" style="top:309px;right:148px">1180</div>
<div class="t" style="top:309px;left:735px">Daffodil</div>
<div class="t" style="top:309px;left:787px">Madeira Classic 40</div>
<div class="t" style="top:323px;left:609px">3.</div>
<div class="t" style="top:323px;left:622px">3</div>
<div class="sw" style="top:324px;background:#000000"></div>
<div class="t r" style="top:323px;right:179px">1,447</div>
<div class="t r" style="top:323px;right:148px">8</div>
<div class="t" style="top:323px;left:735px">Black</div>
<div class="t" style="top:323px;left:787px">Default</div>
<div class="t" style="top:337px;left:609px">4.</div>
<div class="t" style="top:337px;left:622px">4</div>
<div class="sw" style="top:338px;background:#ff0000"></div>
<div class="t r" style="top:337px;right:179px">491</div>
<div class="t r" style="top:337px;right:148px">3</div>
<div class="t" style="top:337px;left:735px">Red</div>
<div class="t" style="top:337px;left:787px">Default</div>
<div class="t" style="top:351px;left:609px">5.</div>
<div class="t" style="top:351px;left:622px">5</div>
<div class="sw" style="top:352px;background:#ffffff"></div>
<div class="t r" style="top:351px;right:179px">42</div>
<div class="t r" style="top:351px;right:148px">9</div>
<div class="t" style="top:351px;left:735px">White</div>
<div class="t" style="top:351px;left:787px">Default</div>
<div class="t" style="top:366px;left:609px">6.</div>
<div class="t" style="top:366px;left:622px">12</div>
<div class="sw" style="top:366px;background:#fb9a35"></div>
<div class="t r" style="top:366px;right:179px">59</div>
<div class="t r" style="top:366px;right:148px">12</div>
<div class="t" style="top:366px;left:735px">Orange</div>
<div class="t" style="top:366px;left:787px">Default</div>
<div class="t" style="top:380px;left:609px">Machine runtime:</div>
<div class="t b" style="top:393.6px;left:609px">Machine</div>
<div class="t b" style="top:393.6px;left:664px">Runtime (hr:min:sec)</div>
<div class="t" style="top:408px;left:609px">Máquina-1</div>
<div class="t r" style="top:408px;right:111px">0:08:25</div>
</body></html>
